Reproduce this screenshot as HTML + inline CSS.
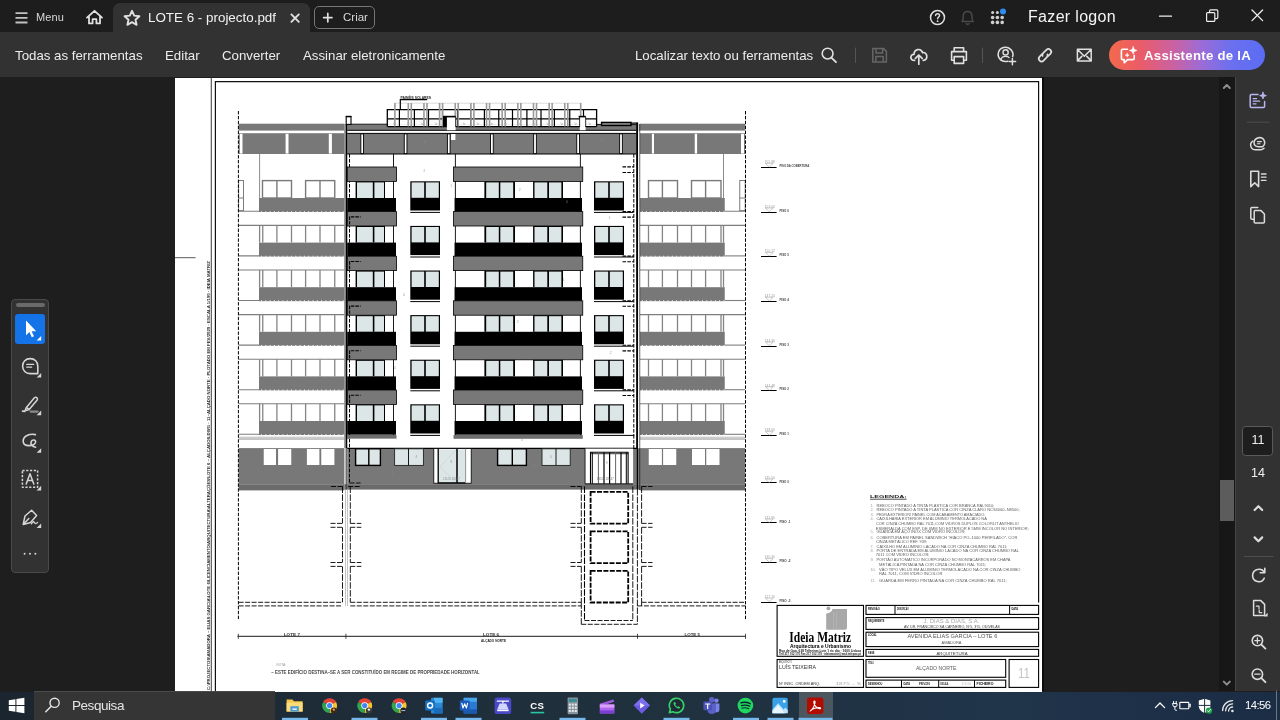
<!DOCTYPE html>
<html lang="pt">
<head>
<meta charset="utf-8">
<title>LOTE 6 - projecto.pdf</title>
<style>
*{box-sizing:border-box;margin:0;padding:0}
html,body{width:1280px;height:720px;overflow:hidden;background:#1e1e1e;font-family:"Liberation Sans",sans-serif;color:#e6e6e6}
.abs{position:absolute}
#titlebar{position:absolute;left:0;top:0;width:1280px;height:32px;background:#1d1d1d}
#toolbar{position:absolute;left:0;top:32px;width:1280px;height:45px;background:#323232}
#tab{position:absolute;left:113px;top:3px;width:197px;height:30px;background:#323232;border-radius:7px 7px 0 0}
.t{position:absolute;white-space:nowrap;line-height:1;will-change:transform}
#criar{position:absolute;left:314px;top:6px;width:61px;height:23px;border:1px solid #757575;border-radius:5px}
#main{position:absolute;left:0;top:77px;width:1280px;height:614px;background:#1e1e1e}
#sbtrack{position:absolute;left:1219px;top:77px;width:16px;height:614px;background:#171717}
#sbthumb{position:absolute;left:1220px;top:480px;width:14px;height:41px;background:#5c5c5c}
#rpanel{position:absolute;left:1235px;top:77px;width:45px;height:614px;background:#323232;border-left:1px solid #464646}
#lpanel{position:absolute;left:11px;top:299px;width:38px;height:274px;background:#323232;border:1px solid #4a4a4a;border-radius:4px}
#page{position:absolute;left:174.5px;top:77.5px;width:867.5px;height:614px;background:#fff}
#pageshadow{position:absolute;left:1042px;top:77px;width:1.5px;height:614px;background:#0c0c0c}
#taskbar{position:absolute;left:0;top:691.500px;width:1280px;height:28.500px;background:linear-gradient(90deg,#1b2530 0%,#1e2c38 25%,#20323f 55%,#20344a 78%,#1b2c45 100%)}
#search{position:absolute;left:34px;top:691.500px;width:240.500px;height:28.500px;background:#353535}
svg{position:absolute;overflow:visible}
</style>
</head>
<body>
<div id="main"></div>
<div id="page"></div>
<div id="pageshadow"></div>
<svg style="left:0;top:0;will-change:transform" width="1280" height="720" viewBox="0 0 1280 720" shape-rendering="auto">
<defs><clipPath id="pg"><rect x="174.5" y="77.5" width="867.5" height="613.7"/></clipPath></defs>
<g clip-path="url(#pg)">
<g fill="none">
<path d="M211.3 77.5L211.3 691" stroke="#4a4a4a" stroke-width="1.1"/>
<path d="M215.4 691V81.6H1038.6V602.5" stroke="#111" stroke-width="1.2"/>
<path d="M175 257.7L195.6 257.7" stroke="#5a5a5a" stroke-width="1"/>
</g>
<rect x="238.6" y="123.7" width="105.8" height="6.9" fill="#787878"/>
<rect x="238.6" y="133.2" width="105.8" height="20.8" fill="#787878"/>
<rect x="239.8" y="133.8" width="2.7" height="19.8" fill="#fff"/>
<rect x="285.6" y="133.8" width="2.9" height="19.8" fill="#fff"/>
<rect x="328.8" y="133.8" width="3.1" height="19.8" fill="#fff"/>
<path d="M259.6 154L259.6 198" stroke="#7e7e7e" stroke-width="0.9"/>
<rect x="262.5" y="180.6" width="29" height="17.4" fill="none" stroke="#7a7a7a" stroke-width="1.4"/>
<path d="M276.9 180.5L276.9 198" stroke="#7a7a7a" stroke-width="1.4"/>
<rect x="305.6" y="180.6" width="29.15" height="17.4" fill="none" stroke="#7a7a7a" stroke-width="1.4"/>
<path d="M320 180.5L320 198" stroke="#7a7a7a" stroke-width="1.4"/>
<rect x="238.6" y="180.5" width="4.9" height="30.1" fill="none" stroke="#7c7c7c" stroke-width="1"/>
<path d="M238.6 198L243.5 198" stroke="#7c7c7c" stroke-width="1"/>
<rect x="259" y="198" width="85.4" height="14" fill="#787878"/>
<path d="M261 211.7H344.4" stroke="#fff" stroke-width="1.1" stroke-dasharray="0.9 3.4" fill="none"/>
<path d="M238.6 211.3L259 211.3" stroke="#7e7e7e" stroke-width="1.1"/>
<path d="M238.6 225.4L344.4 225.4" stroke="#7e7e7e" stroke-width="1.1"/>
<rect x="259" y="242.6" width="85.4" height="14" fill="#787878"/>
<path d="M261 256.3H344.4" stroke="#fff" stroke-width="1.1" stroke-dasharray="0.9 3.4" fill="none"/>
<path d="M238.6 255.9L259 255.9" stroke="#7e7e7e" stroke-width="1.1"/>
<path d="M238.6 270L344.4 270" stroke="#7e7e7e" stroke-width="1.1"/>
<path d="M259.6 225.4L259.6 242.6" stroke="#848484" stroke-width="1.3"/>
<path d="M262.75 225.4L262.75 242.6" stroke="#848484" stroke-width="1.3"/>
<path d="M276.9 225.4L276.9 242.6" stroke="#848484" stroke-width="1.3"/>
<path d="M291.5 225.4L291.5 242.6" stroke="#848484" stroke-width="1.3"/>
<path d="M305.6 225.4L305.6 242.6" stroke="#848484" stroke-width="1.3"/>
<path d="M320 225.4L320 242.6" stroke="#848484" stroke-width="1.3"/>
<path d="M334.75 225.4L334.75 242.6" stroke="#848484" stroke-width="1.3"/>
<rect x="259" y="287.2" width="85.4" height="14" fill="#787878"/>
<path d="M261 300.9H344.4" stroke="#fff" stroke-width="1.1" stroke-dasharray="0.9 3.4" fill="none"/>
<path d="M238.6 300.5L259 300.5" stroke="#7e7e7e" stroke-width="1.1"/>
<path d="M238.6 314.6L344.4 314.6" stroke="#7e7e7e" stroke-width="1.1"/>
<path d="M259.6 270L259.6 287.2" stroke="#848484" stroke-width="1.3"/>
<path d="M262.75 270L262.75 287.2" stroke="#848484" stroke-width="1.3"/>
<path d="M276.9 270L276.9 287.2" stroke="#848484" stroke-width="1.3"/>
<path d="M291.5 270L291.5 287.2" stroke="#848484" stroke-width="1.3"/>
<path d="M305.6 270L305.6 287.2" stroke="#848484" stroke-width="1.3"/>
<path d="M320 270L320 287.2" stroke="#848484" stroke-width="1.3"/>
<path d="M334.75 270L334.75 287.2" stroke="#848484" stroke-width="1.3"/>
<rect x="259" y="331.8" width="85.4" height="14" fill="#787878"/>
<path d="M261 345.5H344.4" stroke="#fff" stroke-width="1.1" stroke-dasharray="0.9 3.4" fill="none"/>
<path d="M238.6 345.1L259 345.1" stroke="#7e7e7e" stroke-width="1.1"/>
<path d="M238.6 359.2L344.4 359.2" stroke="#7e7e7e" stroke-width="1.1"/>
<path d="M259.6 314.6L259.6 331.8" stroke="#848484" stroke-width="1.3"/>
<path d="M262.75 314.6L262.75 331.8" stroke="#848484" stroke-width="1.3"/>
<path d="M276.9 314.6L276.9 331.8" stroke="#848484" stroke-width="1.3"/>
<path d="M291.5 314.6L291.5 331.8" stroke="#848484" stroke-width="1.3"/>
<path d="M305.6 314.6L305.6 331.8" stroke="#848484" stroke-width="1.3"/>
<path d="M320 314.6L320 331.8" stroke="#848484" stroke-width="1.3"/>
<path d="M334.75 314.6L334.75 331.8" stroke="#848484" stroke-width="1.3"/>
<rect x="259" y="376.4" width="85.4" height="14" fill="#787878"/>
<path d="M261 390.1H344.4" stroke="#fff" stroke-width="1.1" stroke-dasharray="0.9 3.4" fill="none"/>
<path d="M238.6 389.7L259 389.7" stroke="#7e7e7e" stroke-width="1.1"/>
<path d="M238.6 403.8L344.4 403.8" stroke="#7e7e7e" stroke-width="1.1"/>
<path d="M259.6 359.2L259.6 376.4" stroke="#848484" stroke-width="1.3"/>
<path d="M262.75 359.2L262.75 376.4" stroke="#848484" stroke-width="1.3"/>
<path d="M276.9 359.2L276.9 376.4" stroke="#848484" stroke-width="1.3"/>
<path d="M291.5 359.2L291.5 376.4" stroke="#848484" stroke-width="1.3"/>
<path d="M305.6 359.2L305.6 376.4" stroke="#848484" stroke-width="1.3"/>
<path d="M320 359.2L320 376.4" stroke="#848484" stroke-width="1.3"/>
<path d="M334.75 359.2L334.75 376.4" stroke="#848484" stroke-width="1.3"/>
<rect x="259" y="421" width="85.4" height="14" fill="#787878"/>
<path d="M261 434.7H344.4" stroke="#fff" stroke-width="1.1" stroke-dasharray="0.9 3.4" fill="none"/>
<path d="M238.6 434.3L259 434.3" stroke="#7e7e7e" stroke-width="1.1"/>
<path d="M259.6 403.8L259.6 421" stroke="#848484" stroke-width="1.3"/>
<path d="M262.75 403.8L262.75 421" stroke="#848484" stroke-width="1.3"/>
<path d="M276.9 403.8L276.9 421" stroke="#848484" stroke-width="1.3"/>
<path d="M291.5 403.8L291.5 421" stroke="#848484" stroke-width="1.3"/>
<path d="M305.6 403.8L305.6 421" stroke="#848484" stroke-width="1.3"/>
<path d="M320 403.8L320 421" stroke="#848484" stroke-width="1.3"/>
<path d="M334.75 403.8L334.75 421" stroke="#848484" stroke-width="1.3"/>
<rect x="238.6" y="436.6" width="105.8" height="2.8" fill="#cdcdcd"/>
<path d="M238.6 439.3L344.4 439.3" stroke="#a8a8a8" stroke-width="0.7"/>
<rect x="238.6" y="448.1" width="105.8" height="36.5" fill="#787878"/>
<rect x="238.6" y="484.4" width="105.8" height="6" fill="#6b6b6b"/>
<rect x="263.75" y="449" width="12.25" height="16" fill="#fff"/>
<rect x="278.1" y="449" width="13.15" height="16" fill="#fff"/>
<rect x="306.9" y="449" width="12.5" height="16" fill="#fff"/>
<rect x="321.25" y="449" width="13.15" height="16" fill="#fff"/>
<rect x="639.8" y="123.7" width="105.3" height="6.9" fill="#787878"/>
<rect x="639.8" y="133.2" width="105.3" height="20.8" fill="#787878"/>
<rect x="651.9" y="133.8" width="2.1" height="19.8" fill="#fff"/>
<rect x="694.75" y="133.8" width="2.35" height="19.8" fill="#fff"/>
<rect x="741" y="133.8" width="3" height="19.8" fill="#fff"/>
<path d="M723.5 154L723.5 198" stroke="#7e7e7e" stroke-width="0.9"/>
<rect x="648.5" y="180.6" width="29" height="17.4" fill="none" stroke="#7a7a7a" stroke-width="1.4"/>
<path d="M662.4 180.5L662.4 198" stroke="#7a7a7a" stroke-width="1.4"/>
<rect x="691.5" y="180.6" width="29.5" height="17.4" fill="none" stroke="#7a7a7a" stroke-width="1.4"/>
<path d="M705.6 180.5L705.6 198" stroke="#7a7a7a" stroke-width="1.4"/>
<rect x="739.75" y="180.5" width="5.45" height="30.1" fill="none" stroke="#7c7c7c" stroke-width="1"/>
<path d="M739.75 198L745.2 198" stroke="#7c7c7c" stroke-width="1"/>
<rect x="639.8" y="198" width="84.95" height="14" fill="#787878"/>
<path d="M641.8 211.7H724.75" stroke="#fff" stroke-width="1.1" stroke-dasharray="0.9 3.4" fill="none"/>
<path d="M724.75 211.3L745.1 211.3" stroke="#7e7e7e" stroke-width="1.1"/>
<path d="M639.8 225.4L745.1 225.4" stroke="#7e7e7e" stroke-width="1.1"/>
<rect x="639.8" y="242.6" width="84.95" height="14" fill="#787878"/>
<path d="M641.8 256.3H724.75" stroke="#fff" stroke-width="1.1" stroke-dasharray="0.9 3.4" fill="none"/>
<path d="M724.75 255.9L745.1 255.9" stroke="#7e7e7e" stroke-width="1.1"/>
<path d="M639.8 270L745.1 270" stroke="#7e7e7e" stroke-width="1.1"/>
<path d="M648.5 225.4L648.5 242.6" stroke="#848484" stroke-width="1.3"/>
<path d="M662.4 225.4L662.4 242.6" stroke="#848484" stroke-width="1.3"/>
<path d="M677.5 225.4L677.5 242.6" stroke="#848484" stroke-width="1.3"/>
<path d="M691.5 225.4L691.5 242.6" stroke="#848484" stroke-width="1.3"/>
<path d="M705.6 225.4L705.6 242.6" stroke="#848484" stroke-width="1.3"/>
<path d="M721 225.4L721 242.6" stroke="#848484" stroke-width="1.3"/>
<path d="M723.5 225.4L723.5 242.6" stroke="#848484" stroke-width="1.3"/>
<rect x="639.8" y="287.2" width="84.95" height="14" fill="#787878"/>
<path d="M641.8 300.9H724.75" stroke="#fff" stroke-width="1.1" stroke-dasharray="0.9 3.4" fill="none"/>
<path d="M724.75 300.5L745.1 300.5" stroke="#7e7e7e" stroke-width="1.1"/>
<path d="M639.8 314.6L745.1 314.6" stroke="#7e7e7e" stroke-width="1.1"/>
<path d="M648.5 270L648.5 287.2" stroke="#848484" stroke-width="1.3"/>
<path d="M662.4 270L662.4 287.2" stroke="#848484" stroke-width="1.3"/>
<path d="M677.5 270L677.5 287.2" stroke="#848484" stroke-width="1.3"/>
<path d="M691.5 270L691.5 287.2" stroke="#848484" stroke-width="1.3"/>
<path d="M705.6 270L705.6 287.2" stroke="#848484" stroke-width="1.3"/>
<path d="M721 270L721 287.2" stroke="#848484" stroke-width="1.3"/>
<path d="M723.5 270L723.5 287.2" stroke="#848484" stroke-width="1.3"/>
<rect x="639.8" y="331.8" width="84.95" height="14" fill="#787878"/>
<path d="M641.8 345.5H724.75" stroke="#fff" stroke-width="1.1" stroke-dasharray="0.9 3.4" fill="none"/>
<path d="M724.75 345.1L745.1 345.1" stroke="#7e7e7e" stroke-width="1.1"/>
<path d="M639.8 359.2L745.1 359.2" stroke="#7e7e7e" stroke-width="1.1"/>
<path d="M648.5 314.6L648.5 331.8" stroke="#848484" stroke-width="1.3"/>
<path d="M662.4 314.6L662.4 331.8" stroke="#848484" stroke-width="1.3"/>
<path d="M677.5 314.6L677.5 331.8" stroke="#848484" stroke-width="1.3"/>
<path d="M691.5 314.6L691.5 331.8" stroke="#848484" stroke-width="1.3"/>
<path d="M705.6 314.6L705.6 331.8" stroke="#848484" stroke-width="1.3"/>
<path d="M721 314.6L721 331.8" stroke="#848484" stroke-width="1.3"/>
<path d="M723.5 314.6L723.5 331.8" stroke="#848484" stroke-width="1.3"/>
<rect x="639.8" y="376.4" width="84.95" height="14" fill="#787878"/>
<path d="M641.8 390.1H724.75" stroke="#fff" stroke-width="1.1" stroke-dasharray="0.9 3.4" fill="none"/>
<path d="M724.75 389.7L745.1 389.7" stroke="#7e7e7e" stroke-width="1.1"/>
<path d="M639.8 403.8L745.1 403.8" stroke="#7e7e7e" stroke-width="1.1"/>
<path d="M648.5 359.2L648.5 376.4" stroke="#848484" stroke-width="1.3"/>
<path d="M662.4 359.2L662.4 376.4" stroke="#848484" stroke-width="1.3"/>
<path d="M677.5 359.2L677.5 376.4" stroke="#848484" stroke-width="1.3"/>
<path d="M691.5 359.2L691.5 376.4" stroke="#848484" stroke-width="1.3"/>
<path d="M705.6 359.2L705.6 376.4" stroke="#848484" stroke-width="1.3"/>
<path d="M721 359.2L721 376.4" stroke="#848484" stroke-width="1.3"/>
<path d="M723.5 359.2L723.5 376.4" stroke="#848484" stroke-width="1.3"/>
<rect x="639.8" y="421" width="84.95" height="14" fill="#787878"/>
<path d="M641.8 434.7H724.75" stroke="#fff" stroke-width="1.1" stroke-dasharray="0.9 3.4" fill="none"/>
<path d="M724.75 434.3L745.1 434.3" stroke="#7e7e7e" stroke-width="1.1"/>
<path d="M648.5 403.8L648.5 421" stroke="#848484" stroke-width="1.3"/>
<path d="M662.4 403.8L662.4 421" stroke="#848484" stroke-width="1.3"/>
<path d="M677.5 403.8L677.5 421" stroke="#848484" stroke-width="1.3"/>
<path d="M691.5 403.8L691.5 421" stroke="#848484" stroke-width="1.3"/>
<path d="M705.6 403.8L705.6 421" stroke="#848484" stroke-width="1.3"/>
<path d="M721 403.8L721 421" stroke="#848484" stroke-width="1.3"/>
<path d="M723.5 403.8L723.5 421" stroke="#848484" stroke-width="1.3"/>
<rect x="639.8" y="436.6" width="105.3" height="2.8" fill="#cdcdcd"/>
<path d="M639.8 439.3L745.1 439.3" stroke="#a8a8a8" stroke-width="0.7"/>
<rect x="639.8" y="448.1" width="105.3" height="36.5" fill="#787878"/>
<rect x="639.8" y="484.4" width="105.3" height="6" fill="#6b6b6b"/>
<rect x="648.75" y="449" width="13.15" height="16" fill="#fff"/>
<rect x="663.1" y="449" width="13.15" height="16" fill="#fff"/>
<rect x="692" y="449" width="13" height="16" fill="#fff"/>
<rect x="706.25" y="449" width="13.25" height="16" fill="#fff"/>
<g fill="none">
<path d="M238.4 111L238.4 619.5" stroke="#000" stroke-width="1" stroke-dasharray="3.4 1.5"/>
<path d="M745.5 111L745.5 619.5" stroke="#000" stroke-width="1" stroke-dasharray="3.4 1.5"/>
</g>
<rect x="347.2" y="124.4" width="289.2" height="5.8" fill="#787878"/>
<rect x="387.3" y="124.2" width="209.3" height="2.8" fill="#fff"/>
<rect x="347.2" y="133.5" width="289.2" height="20.5" fill="#787878"/>
<g fill="none">
<path d="M351 124.2L387.3 124.2" stroke="#000" stroke-width="0.9"/>
<path d="M596.6 124.4L601.5 124.4" stroke="#000" stroke-width="0.9"/>
<path d="M631 124.6L636 124.6" stroke="#000" stroke-width="0.9"/>
<path d="M347.2 130.3L636.4 130.3" stroke="#000" stroke-width="1"/>
<path d="M347.2 133.4L636.4 133.4" stroke="#000" stroke-width="1"/>
<path d="M347.2 154L636.4 154" stroke="#000" stroke-width="1.1"/>
</g>
<rect x="360.85" y="133.9" width="2.7" height="19.7" fill="#fff" stroke="#000" stroke-width="0.9"/>
<rect x="404.25" y="133.9" width="2.7" height="19.7" fill="#fff" stroke="#000" stroke-width="0.9"/>
<rect x="447.4" y="133.9" width="2.7" height="19.7" fill="#fff" stroke="#000" stroke-width="0.9"/>
<rect x="490.55" y="133.9" width="2.7" height="19.7" fill="#fff" stroke="#000" stroke-width="0.9"/>
<rect x="533.65" y="133.9" width="2.7" height="19.7" fill="#fff" stroke="#000" stroke-width="0.9"/>
<rect x="576.75" y="133.9" width="2.7" height="19.7" fill="#fff" stroke="#000" stroke-width="0.9"/>
<rect x="619.65" y="133.9" width="2.7" height="19.7" fill="#fff" stroke="#000" stroke-width="0.9"/>
<g fill="none">
<path d="M394.5 103.2L581 103.2" stroke="#c4c4c4" stroke-width="0.6"/>
<path d="M387.3 126.6V109.7H596.6V126.6" stroke="#000" stroke-width="1.3"/>
<path d="M387.3 118.8L596.6 118.8" stroke="#000" stroke-width="1.2"/>
<path d="M387.3 126.6L596.6 126.6" stroke="#000" stroke-width="1.1"/>
<path d="M399.4 109.7L399.4 126.6" stroke="#000" stroke-width="1.2"/>
<path d="M414.4 109.7L414.4 126.6" stroke="#000" stroke-width="1.2"/>
<path d="M428.5 109.7L428.5 126.6" stroke="#000" stroke-width="1.2"/>
<path d="M442.5 109.7L442.5 126.6" stroke="#000" stroke-width="1.2"/>
<path d="M457.5 109.7L457.5 126.6" stroke="#000" stroke-width="1.2"/>
<path d="M470.6 109.7L470.6 126.6" stroke="#000" stroke-width="1.2"/>
<path d="M484.4 109.7L484.4 126.6" stroke="#000" stroke-width="1.2"/>
<path d="M498.75 109.7L498.75 126.6" stroke="#000" stroke-width="1.2"/>
<path d="M512.5 109.7L512.5 126.6" stroke="#000" stroke-width="1.2"/>
<path d="M526.9 109.7L526.9 126.6" stroke="#000" stroke-width="1.2"/>
<path d="M541 109.7L541 126.6" stroke="#000" stroke-width="1.2"/>
<path d="M554.4 109.7L554.4 126.6" stroke="#000" stroke-width="1.2"/>
<path d="M569.75 109.7L569.75 126.6" stroke="#000" stroke-width="1.2"/>
<path d="M583.5 109.7L583.5 126.6" stroke="#000" stroke-width="1.2"/>
<path d="M394.9 103L394.9 126.5" stroke="#9a9a9a" stroke-width="1.6"/>
<path d="M580.7 103L580.7 126.5" stroke="#9a9a9a" stroke-width="1.6"/>
<path d="M408.3 103L408.3 126.5" stroke="#9a9a9a" stroke-width="1.6"/>
<path d="M411.3 103L411.3 126.5" stroke="#9a9a9a" stroke-width="1.6"/>
<path d="M423.95 103L423.95 126.5" stroke="#9a9a9a" stroke-width="1.6"/>
<path d="M426.95 103L426.95 126.5" stroke="#9a9a9a" stroke-width="1.6"/>
<path d="M439.6 103L439.6 126.5" stroke="#9a9a9a" stroke-width="1.6"/>
<path d="M442.6 103L442.6 126.5" stroke="#9a9a9a" stroke-width="1.6"/>
<path d="M455.25 103L455.25 126.5" stroke="#9a9a9a" stroke-width="1.6"/>
<path d="M458.25 103L458.25 126.5" stroke="#9a9a9a" stroke-width="1.6"/>
<path d="M470.9 103L470.9 126.5" stroke="#9a9a9a" stroke-width="1.6"/>
<path d="M473.9 103L473.9 126.5" stroke="#9a9a9a" stroke-width="1.6"/>
<path d="M486.55 103L486.55 126.5" stroke="#9a9a9a" stroke-width="1.6"/>
<path d="M489.55 103L489.55 126.5" stroke="#9a9a9a" stroke-width="1.6"/>
<path d="M502.2 103L502.2 126.5" stroke="#9a9a9a" stroke-width="1.6"/>
<path d="M505.2 103L505.2 126.5" stroke="#9a9a9a" stroke-width="1.6"/>
<path d="M517.85 103L517.85 126.5" stroke="#9a9a9a" stroke-width="1.6"/>
<path d="M520.85 103L520.85 126.5" stroke="#9a9a9a" stroke-width="1.6"/>
<path d="M533.5 103L533.5 126.5" stroke="#9a9a9a" stroke-width="1.6"/>
<path d="M536.5 103L536.5 126.5" stroke="#9a9a9a" stroke-width="1.6"/>
<path d="M549.15 103L549.15 126.5" stroke="#9a9a9a" stroke-width="1.6"/>
<path d="M552.15 103L552.15 126.5" stroke="#9a9a9a" stroke-width="1.6"/>
<path d="M564.8 103L564.8 126.5" stroke="#9a9a9a" stroke-width="1.6"/>
<path d="M567.8 103L567.8 126.5" stroke="#9a9a9a" stroke-width="1.6"/>
<path d="M393.28 122.4l1 2.6 1-2" stroke="#aaa" stroke-width="0.6"/>
<path d="M407.23 122.4l1 2.6 1-2" stroke="#aaa" stroke-width="0.6"/>
<path d="M421.18 122.4l1 2.6 1-2" stroke="#aaa" stroke-width="0.6"/>
<path d="M435.14 122.4l1 2.6 1-2" stroke="#aaa" stroke-width="0.6"/>
<path d="M449.09 122.4l1 2.6 1-2" stroke="#aaa" stroke-width="0.6"/>
<path d="M463.04 122.4l1 2.6 1-2" stroke="#aaa" stroke-width="0.6"/>
<path d="M477 122.4l1 2.6 1-2" stroke="#aaa" stroke-width="0.6"/>
<path d="M490.95 122.4l1 2.6 1-2" stroke="#aaa" stroke-width="0.6"/>
<path d="M504.9 122.4l1 2.6 1-2" stroke="#aaa" stroke-width="0.6"/>
<path d="M518.86 122.4l1 2.6 1-2" stroke="#aaa" stroke-width="0.6"/>
<path d="M532.81 122.4l1 2.6 1-2" stroke="#aaa" stroke-width="0.6"/>
<path d="M546.76 122.4l1 2.6 1-2" stroke="#aaa" stroke-width="0.6"/>
<path d="M560.72 122.4l1 2.6 1-2" stroke="#aaa" stroke-width="0.6"/>
<path d="M574.67 122.4l1 2.6 1-2" stroke="#aaa" stroke-width="0.6"/>
<path d="M588.62 122.4l1 2.6 1-2" stroke="#aaa" stroke-width="0.6"/>
</g>
<rect x="443" y="116" width="4" height="11" fill="#000"/>
<rect x="446.9" y="116.9" width="8.7" height="13.3" fill="#fff"/>
<rect x="443" y="115.8" width="12.8" height="1.6" fill="#000"/>
<path d="M455.7 117L455.7 127" stroke="#000" stroke-width="0.8"/>
<rect x="451" y="134" width="4.4" height="6" fill="#fff"/>
<rect x="579.75" y="116.4" width="5.85" height="13.8" fill="#fff"/>
<rect x="578.6" y="115.8" width="7.2" height="1.6" fill="#000"/>
<g fill="none">
<path d="M579.6 117L579.6 127" stroke="#000" stroke-width="0.8"/>
<path d="M585.7 117L585.7 127" stroke="#000" stroke-width="0.8"/>
</g>
<rect x="601.6" y="122.4" width="29.4" height="3.1" fill="#8a8a8a" stroke="#000" stroke-width="1.4"/>
<rect x="346.2" y="116.6" width="4.8" height="7.8" fill="#fff" stroke="#000" stroke-width="1.1"/>
<rect x="345.8" y="115.8" width="5.6" height="1.4" fill="#000"/>
<path d="M400.3 109.7V99.7H427.2" stroke="#000" stroke-width="1.2" fill="none"/>
<g fill="none">
<path d="M393.5 154L393.5 435" stroke="#000" stroke-width="0.9"/>
<path d="M455.4 154L455.4 435" stroke="#000" stroke-width="0.9"/>
<path d="M580.4 154L580.4 435" stroke="#000" stroke-width="0.9"/>
<path d="M349.5 154L349.5 438" stroke="#000" stroke-width="1" stroke-dasharray="3.6 1.4"/>
<path d="M633.8 154L633.8 436" stroke="#000" stroke-width="1" stroke-dasharray="3.6 1.4"/>
</g>
<rect x="355.6" y="181.3" width="29.4" height="16.7" fill="#000"/>
<rect x="357" y="182.4" width="15.8" height="15.6" fill="#dde6e6"/>
<rect x="374.4" y="182.4" width="9.6" height="15.6" fill="#dde6e6"/>
<rect x="484.4" y="181.3" width="30.6" height="16.7" fill="#000"/>
<rect x="486.2" y="182.4" width="12.6" height="15.6" fill="#dde6e6"/>
<rect x="500.3" y="182.4" width="12.9" height="15.6" fill="#dde6e6"/>
<rect x="533.1" y="181.3" width="29.9" height="16.7" fill="#000"/>
<rect x="534.5" y="182.4" width="12.8" height="15.6" fill="#dde6e6"/>
<rect x="549" y="182.4" width="12.4" height="15.6" fill="#dde6e6"/>
<rect x="347.2" y="167" width="49.3" height="14.4" fill="#787878" stroke="#000" stroke-width="0.8"/>
<rect x="453.5" y="167" width="129.25" height="14.4" fill="#787878" stroke="#000" stroke-width="0.8"/>
<rect x="347.2" y="198" width="48.8" height="13.7" fill="#000"/>
<rect x="454.6" y="198" width="127.4" height="13.7" fill="#000"/>
<rect x="410.3" y="181.3" width="29.7" height="29.2" fill="#000"/>
<rect x="411.6" y="182.4" width="12.6" height="15.4" fill="#dde6e6"/>
<rect x="425.8" y="182.4" width="13" height="15.4" fill="#dde6e6"/>
<rect x="594" y="181.3" width="30" height="29.2" fill="#000"/>
<rect x="595.3" y="182.4" width="12.9" height="15.4" fill="#dde6e6"/>
<rect x="609.8" y="182.4" width="13" height="15.4" fill="#dde6e6"/>
<g fill="none">
<path d="M410.3 212.4L440 212.4" stroke="#000" stroke-width="1"/>
<path d="M594 212.4L633.5 212.4" stroke="#000" stroke-width="1"/>
<path d="M622.5 166.9L633.8 166.9" stroke="#000" stroke-width="1.1" stroke-dasharray="3.6 1.2"/>
<path d="M622.5 172.5L633.8 172.5" stroke="#000" stroke-width="1.1" stroke-dasharray="3.6 1.2"/>
</g>
<rect x="355.6" y="225.9" width="29.4" height="16.7" fill="#000"/>
<rect x="357" y="227" width="15.8" height="15.6" fill="#dde6e6"/>
<rect x="374.4" y="227" width="9.6" height="15.6" fill="#dde6e6"/>
<rect x="484.4" y="225.9" width="30.6" height="16.7" fill="#000"/>
<rect x="486.2" y="227" width="12.6" height="15.6" fill="#dde6e6"/>
<rect x="500.3" y="227" width="12.9" height="15.6" fill="#dde6e6"/>
<rect x="533.1" y="225.9" width="29.9" height="16.7" fill="#000"/>
<rect x="534.5" y="227" width="12.8" height="15.6" fill="#dde6e6"/>
<rect x="549" y="227" width="12.4" height="15.6" fill="#dde6e6"/>
<rect x="347.2" y="211.6" width="49.3" height="14.4" fill="#787878" stroke="#000" stroke-width="0.8"/>
<rect x="453.5" y="211.6" width="129.25" height="14.4" fill="#787878" stroke="#000" stroke-width="0.8"/>
<rect x="347.2" y="242.6" width="48.8" height="13.7" fill="#000"/>
<rect x="454.6" y="242.6" width="127.4" height="13.7" fill="#000"/>
<rect x="410.3" y="225.9" width="29.7" height="29.2" fill="#000"/>
<rect x="411.6" y="227" width="12.6" height="15.4" fill="#dde6e6"/>
<rect x="425.8" y="227" width="13" height="15.4" fill="#dde6e6"/>
<rect x="594" y="225.9" width="30" height="29.2" fill="#000"/>
<rect x="595.3" y="227" width="12.9" height="15.4" fill="#dde6e6"/>
<rect x="609.8" y="227" width="13" height="15.4" fill="#dde6e6"/>
<g fill="none">
<path d="M410.3 257L440 257" stroke="#000" stroke-width="1"/>
<path d="M594 257L633.5 257" stroke="#000" stroke-width="1"/>
<path d="M622.5 211.5L633.8 211.5" stroke="#000" stroke-width="1.1" stroke-dasharray="3.6 1.2"/>
<path d="M622.5 217.1L633.8 217.1" stroke="#000" stroke-width="1.1" stroke-dasharray="3.6 1.2"/>
<path d="M349.6 224.6V216.9H360.6" stroke="#000" stroke-width="1.1" stroke-dasharray="3.4 1.1"/>
</g>
<rect x="355.6" y="270.5" width="29.4" height="16.7" fill="#000"/>
<rect x="357" y="271.6" width="15.8" height="15.6" fill="#dde6e6"/>
<rect x="374.4" y="271.6" width="9.6" height="15.6" fill="#dde6e6"/>
<rect x="484.4" y="270.5" width="30.6" height="16.7" fill="#000"/>
<rect x="486.2" y="271.6" width="12.6" height="15.6" fill="#dde6e6"/>
<rect x="500.3" y="271.6" width="12.9" height="15.6" fill="#dde6e6"/>
<rect x="533.1" y="270.5" width="29.9" height="16.7" fill="#000"/>
<rect x="534.5" y="271.6" width="12.8" height="15.6" fill="#dde6e6"/>
<rect x="549" y="271.6" width="12.4" height="15.6" fill="#dde6e6"/>
<rect x="347.2" y="256.2" width="49.3" height="14.4" fill="#787878" stroke="#000" stroke-width="0.8"/>
<rect x="453.5" y="256.2" width="129.25" height="14.4" fill="#787878" stroke="#000" stroke-width="0.8"/>
<rect x="347.2" y="287.2" width="48.8" height="13.7" fill="#000"/>
<rect x="454.6" y="287.2" width="127.4" height="13.7" fill="#000"/>
<rect x="410.3" y="270.5" width="29.7" height="29.2" fill="#000"/>
<rect x="411.6" y="271.6" width="12.6" height="15.4" fill="#dde6e6"/>
<rect x="425.8" y="271.6" width="13" height="15.4" fill="#dde6e6"/>
<rect x="594" y="270.5" width="30" height="29.2" fill="#000"/>
<rect x="595.3" y="271.6" width="12.9" height="15.4" fill="#dde6e6"/>
<rect x="609.8" y="271.6" width="13" height="15.4" fill="#dde6e6"/>
<g fill="none">
<path d="M410.3 301.6L440 301.6" stroke="#000" stroke-width="1"/>
<path d="M594 301.6L633.5 301.6" stroke="#000" stroke-width="1"/>
<path d="M622.5 256.1L633.8 256.1" stroke="#000" stroke-width="1.1" stroke-dasharray="3.6 1.2"/>
<path d="M622.5 261.7L633.8 261.7" stroke="#000" stroke-width="1.1" stroke-dasharray="3.6 1.2"/>
<path d="M349.6 269.2V261.5H360.6" stroke="#000" stroke-width="1.1" stroke-dasharray="3.4 1.1"/>
</g>
<rect x="355.6" y="315.1" width="29.4" height="16.7" fill="#000"/>
<rect x="357" y="316.2" width="15.8" height="15.6" fill="#dde6e6"/>
<rect x="374.4" y="316.2" width="9.6" height="15.6" fill="#dde6e6"/>
<rect x="484.4" y="315.1" width="30.6" height="16.7" fill="#000"/>
<rect x="486.2" y="316.2" width="12.6" height="15.6" fill="#dde6e6"/>
<rect x="500.3" y="316.2" width="12.9" height="15.6" fill="#dde6e6"/>
<rect x="533.1" y="315.1" width="29.9" height="16.7" fill="#000"/>
<rect x="534.5" y="316.2" width="12.8" height="15.6" fill="#dde6e6"/>
<rect x="549" y="316.2" width="12.4" height="15.6" fill="#dde6e6"/>
<rect x="347.2" y="300.8" width="49.3" height="14.4" fill="#787878" stroke="#000" stroke-width="0.8"/>
<rect x="453.5" y="300.8" width="129.25" height="14.4" fill="#787878" stroke="#000" stroke-width="0.8"/>
<rect x="347.2" y="331.8" width="48.8" height="13.7" fill="#000"/>
<rect x="454.6" y="331.8" width="127.4" height="13.7" fill="#000"/>
<rect x="410.3" y="315.1" width="29.7" height="29.2" fill="#000"/>
<rect x="411.6" y="316.2" width="12.6" height="15.4" fill="#dde6e6"/>
<rect x="425.8" y="316.2" width="13" height="15.4" fill="#dde6e6"/>
<rect x="594" y="315.1" width="30" height="29.2" fill="#000"/>
<rect x="595.3" y="316.2" width="12.9" height="15.4" fill="#dde6e6"/>
<rect x="609.8" y="316.2" width="13" height="15.4" fill="#dde6e6"/>
<g fill="none">
<path d="M410.3 346.2L440 346.2" stroke="#000" stroke-width="1"/>
<path d="M594 346.2L633.5 346.2" stroke="#000" stroke-width="1"/>
<path d="M622.5 300.7L633.8 300.7" stroke="#000" stroke-width="1.1" stroke-dasharray="3.6 1.2"/>
<path d="M622.5 306.3L633.8 306.3" stroke="#000" stroke-width="1.1" stroke-dasharray="3.6 1.2"/>
<path d="M349.6 313.8V306.1H360.6" stroke="#000" stroke-width="1.1" stroke-dasharray="3.4 1.1"/>
</g>
<rect x="355.6" y="359.7" width="29.4" height="16.7" fill="#000"/>
<rect x="357" y="360.8" width="15.8" height="15.6" fill="#dde6e6"/>
<rect x="374.4" y="360.8" width="9.6" height="15.6" fill="#dde6e6"/>
<rect x="484.4" y="359.7" width="30.6" height="16.7" fill="#000"/>
<rect x="486.2" y="360.8" width="12.6" height="15.6" fill="#dde6e6"/>
<rect x="500.3" y="360.8" width="12.9" height="15.6" fill="#dde6e6"/>
<rect x="533.1" y="359.7" width="29.9" height="16.7" fill="#000"/>
<rect x="534.5" y="360.8" width="12.8" height="15.6" fill="#dde6e6"/>
<rect x="549" y="360.8" width="12.4" height="15.6" fill="#dde6e6"/>
<rect x="347.2" y="345.4" width="49.3" height="14.4" fill="#787878" stroke="#000" stroke-width="0.8"/>
<rect x="453.5" y="345.4" width="129.25" height="14.4" fill="#787878" stroke="#000" stroke-width="0.8"/>
<rect x="347.2" y="376.4" width="48.8" height="13.7" fill="#000"/>
<rect x="454.6" y="376.4" width="127.4" height="13.7" fill="#000"/>
<rect x="410.3" y="359.7" width="29.7" height="29.2" fill="#000"/>
<rect x="411.6" y="360.8" width="12.6" height="15.4" fill="#dde6e6"/>
<rect x="425.8" y="360.8" width="13" height="15.4" fill="#dde6e6"/>
<rect x="594" y="359.7" width="30" height="29.2" fill="#000"/>
<rect x="595.3" y="360.8" width="12.9" height="15.4" fill="#dde6e6"/>
<rect x="609.8" y="360.8" width="13" height="15.4" fill="#dde6e6"/>
<g fill="none">
<path d="M410.3 390.8L440 390.8" stroke="#000" stroke-width="1"/>
<path d="M594 390.8L633.5 390.8" stroke="#000" stroke-width="1"/>
<path d="M622.5 345.3L633.8 345.3" stroke="#000" stroke-width="1.1" stroke-dasharray="3.6 1.2"/>
<path d="M622.5 350.9L633.8 350.9" stroke="#000" stroke-width="1.1" stroke-dasharray="3.6 1.2"/>
<path d="M349.6 358.4V350.7H360.6" stroke="#000" stroke-width="1.1" stroke-dasharray="3.4 1.1"/>
</g>
<rect x="355.6" y="404.3" width="29.4" height="16.7" fill="#000"/>
<rect x="357" y="405.4" width="15.8" height="15.6" fill="#dde6e6"/>
<rect x="374.4" y="405.4" width="9.6" height="15.6" fill="#dde6e6"/>
<rect x="484.4" y="404.3" width="30.6" height="16.7" fill="#000"/>
<rect x="486.2" y="405.4" width="12.6" height="15.6" fill="#dde6e6"/>
<rect x="500.3" y="405.4" width="12.9" height="15.6" fill="#dde6e6"/>
<rect x="533.1" y="404.3" width="29.9" height="16.7" fill="#000"/>
<rect x="534.5" y="405.4" width="12.8" height="15.6" fill="#dde6e6"/>
<rect x="549" y="405.4" width="12.4" height="15.6" fill="#dde6e6"/>
<rect x="347.2" y="390" width="49.3" height="14.4" fill="#787878" stroke="#000" stroke-width="0.8"/>
<rect x="453.5" y="390" width="129.25" height="14.4" fill="#787878" stroke="#000" stroke-width="0.8"/>
<rect x="347.2" y="421" width="48.8" height="13.7" fill="#000"/>
<rect x="454.6" y="421" width="127.4" height="13.7" fill="#000"/>
<rect x="410.3" y="404.3" width="29.7" height="29.2" fill="#000"/>
<rect x="411.6" y="405.4" width="12.6" height="15.4" fill="#dde6e6"/>
<rect x="425.8" y="405.4" width="13" height="15.4" fill="#dde6e6"/>
<rect x="594" y="404.3" width="30" height="29.2" fill="#000"/>
<rect x="595.3" y="405.4" width="12.9" height="15.4" fill="#dde6e6"/>
<rect x="609.8" y="405.4" width="13" height="15.4" fill="#dde6e6"/>
<g fill="none">
<path d="M410.3 435.4L440 435.4" stroke="#000" stroke-width="1"/>
<path d="M594 435.4L633.5 435.4" stroke="#000" stroke-width="1"/>
<path d="M622.5 389.9L633.8 389.9" stroke="#000" stroke-width="1.1" stroke-dasharray="3.6 1.2"/>
<path d="M622.5 395.5L633.8 395.5" stroke="#000" stroke-width="1.1" stroke-dasharray="3.6 1.2"/>
<path d="M349.6 403V395.3H360.6" stroke="#000" stroke-width="1.1" stroke-dasharray="3.4 1.1"/>
</g>
<rect x="347.2" y="435" width="49.3" height="3.8" fill="#6e6e6e"/>
<rect x="453.5" y="435" width="129.25" height="3.8" fill="#6e6e6e"/>
<rect x="349.8" y="438.8" width="46.7" height="9.2" fill="#fff"/>
<rect x="347.2" y="448.3" width="292.6" height="36.1" fill="#787878"/>
<rect x="344.4" y="484.2" width="295.4" height="5.4" fill="#6b6b6b"/>
<g fill="none">
<path d="M347.2 448.3L637 448.3" stroke="#000" stroke-width="1.2"/>
</g>
<rect x="355.6" y="448.8" width="24.8" height="16.6" fill="#dde6e6" stroke="#000" stroke-width="1.4"/>
<path d="M368.8 448.8V465.4" stroke="#000" stroke-width="1.4" fill="none"/>
<rect x="394.6" y="448.8" width="28.8" height="16.6" fill="#dde6e6" stroke="#222" stroke-width="0.9"/>
<path d="M408.5 448.8V465.4" stroke="#000" stroke-width="0.9" fill="none"/>
<rect x="497.6" y="448.8" width="28.8" height="16.6" fill="#dde6e6" stroke="#000" stroke-width="1.4"/>
<path d="M512.3 448.8V465.4" stroke="#000" stroke-width="1.4" fill="none"/>
<rect x="542" y="448.8" width="28.2" height="16.6" fill="#dde6e6" stroke="#222" stroke-width="0.9"/>
<path d="M556 448.8V465.4" stroke="#000" stroke-width="0.9" fill="none"/>
<rect x="433.8" y="448.6" width="37.4" height="34.6" fill="#fff" stroke="#000" stroke-width="0.8"/>
<rect x="438.2" y="449.4" width="27.2" height="33.2" fill="#dde6e6"/>
<g fill="none">
<path d="M438.2 448.8V482.8H465.4" stroke="#000" stroke-width="1.3"/>
<path d="M457 448.8L457 482.8" stroke="#000" stroke-width="1.5"/>
<path d="M465.6 448.8L465.6 482.8" stroke="#777" stroke-width="0.8"/>
<path d="M455.4 450.5 440 467 455.4 482" stroke="#b8c0c0" stroke-width="0.6" stroke-dasharray="2 1.4"/>
</g>
<rect x="585" y="448.6" width="48.1" height="35.2" fill="#fff"/>
<g fill="none">
<path d="M590.5 483.8V452.3H628.1V483.8" stroke="#000" stroke-width="1.1"/>
<path d="M590.5 453.7L628.1 453.7" stroke="#000" stroke-width="0.8"/>
<path d="M585.1 448.6L585.1 483.8" stroke="#000" stroke-width="0.8"/>
<path d="M592.3 452.3L592.3 483.8" stroke="#000" stroke-width="1"/>
<path d="M598.4 452.3L598.4 483.8" stroke="#666" stroke-width="1"/>
<path d="M604 452.3L604 483.8" stroke="#000" stroke-width="1.2"/>
<path d="M609.6 452.3L609.6 483.8" stroke="#000" stroke-width="1.2"/>
<path d="M615.6 452.3L615.6 483.8" stroke="#666" stroke-width="1"/>
<path d="M621 452.3L621 483.8" stroke="#000" stroke-width="1.2"/>
<path d="M626.3 452.3L626.3 483.8" stroke="#000" stroke-width="1"/>
<path d="M585 483.9L633 483.9" stroke="#000" stroke-width="1"/>
</g>
<g fill="none">
<path d="M349.5 438.8L349.5 483" stroke="#000" stroke-width="1" stroke-dasharray="3.6 1.4"/>
<path d="M633.8 435L633.8 449" stroke="#000" stroke-width="1" stroke-dasharray="3.6 1.4"/>
<path d="M344.7 124L344.7 448" stroke="#8a8a8a" stroke-width="1"/>
<path d="M346.4 124L346.4 448" stroke="#000" stroke-width="1.7"/>
<path d="M346.2 448L346.2 489.5" stroke="#4a4a4a" stroke-width="1.2"/>
<path d="M637.15 122.8L637.15 448" stroke="#000" stroke-width="2"/>
<path d="M637.4 448L637.4 489" stroke="#000" stroke-width="1.2"/>
<path d="M639.7 124L639.7 490" stroke="#222" stroke-width="0.9"/>
<path d="M631 123.2L638 123.2" stroke="#000" stroke-width="1.2"/>
</g>
<rect x="638.3" y="131" width="1" height="317" fill="#fff"/>
<g fill="none" stroke="#000">
<path d="M342.5 486.5L342.5 523.4" stroke="#000" stroke-width="0.9" stroke-dasharray="6.5 1.4"/>
<path d="M350.3 486.5L350.3 523.4" stroke="#000" stroke-width="0.9" stroke-dasharray="6.5 1.4"/>
<path d="M581.3 486.5L581.3 523.4" stroke="#000" stroke-width="0.9" stroke-dasharray="6.5 1.4"/>
<path d="M641.6 486.5L641.6 523.4" stroke="#000" stroke-width="0.9" stroke-dasharray="6.5 1.4"/>
<path d="M342.5 527.3L342.5 562.5" stroke="#000" stroke-width="0.9" stroke-dasharray="6.5 1.4"/>
<path d="M350.3 527.3L350.3 562.5" stroke="#000" stroke-width="0.9" stroke-dasharray="6.5 1.4"/>
<path d="M581.3 527.3L581.3 562.5" stroke="#000" stroke-width="0.9" stroke-dasharray="6.5 1.4"/>
<path d="M641.6 527.3L641.6 562.5" stroke="#000" stroke-width="0.9" stroke-dasharray="6.5 1.4"/>
<path d="M342.5 566.4L342.5 602.3" stroke="#000" stroke-width="0.9" stroke-dasharray="6.5 1.4"/>
<path d="M350.3 566.4L350.3 602.3" stroke="#000" stroke-width="0.9" stroke-dasharray="6.5 1.4"/>
<path d="M581.3 566.4L581.3 602.3" stroke="#000" stroke-width="0.9" stroke-dasharray="6.5 1.4"/>
<path d="M641.6 566.4L641.6 602.3" stroke="#000" stroke-width="0.9" stroke-dasharray="6.5 1.4"/>
<path d="M581.3 602.3L581.3 624.3" stroke="#000" stroke-width="0.9" stroke-dasharray="6.5 1.4"/>
<path d="M584.5 486.5L584.5 620.5" stroke="#000" stroke-width="1.1" stroke-dasharray="6.5 1.4"/>
<path d="M632.8 486.5L632.8 620.5" stroke="#000" stroke-width="0.9" stroke-dasharray="6.5 1.4"/>
<path d="M637.4 489L637.4 624.3" stroke="#000" stroke-width="0.9" stroke-dasharray="6.5 1.4"/>
<path d="M641.6 602.3L641.6 605.9" stroke="#000" stroke-width="0.9" stroke-dasharray="6.5 1.4"/>
<path d="M331 486.5L342.5 486.5" stroke="#000" stroke-width="0.9" stroke-dasharray="5 1.5"/>
<path d="M348.2 486.5L360.6 486.5" stroke="#000" stroke-width="0.9" stroke-dasharray="5 1.5"/>
<path d="M349.6 483L360.6 483" stroke="#000" stroke-width="0.9" stroke-dasharray="5 1.5"/>
<path d="M570.5 486.5L581.3 486.5" stroke="#000" stroke-width="0.9" stroke-dasharray="5 1.5"/>
<path d="M641.6 486.5L652.5 486.5" stroke="#000" stroke-width="0.9" stroke-dasharray="5 1.5"/>
<path d="M330.5 523.4L342.5 523.4" stroke="#000" stroke-width="0.9" stroke-dasharray="5 1.5"/>
<path d="M350.3 523.4L361.3 523.4" stroke="#000" stroke-width="0.9" stroke-dasharray="5 1.5"/>
<path d="M570.5 523.4L581.3 523.4" stroke="#000" stroke-width="0.9" stroke-dasharray="5 1.5"/>
<path d="M641.6 523.4L652.5 523.4" stroke="#000" stroke-width="0.9" stroke-dasharray="5 1.5"/>
<path d="M330.5 527.3L342.5 527.3" stroke="#000" stroke-width="0.9" stroke-dasharray="5 1.5"/>
<path d="M350.3 527.3L361.3 527.3" stroke="#000" stroke-width="0.9" stroke-dasharray="5 1.5"/>
<path d="M570.5 527.3L581.3 527.3" stroke="#000" stroke-width="0.9" stroke-dasharray="5 1.5"/>
<path d="M641.6 527.3L652.5 527.3" stroke="#000" stroke-width="0.9" stroke-dasharray="5 1.5"/>
<path d="M330.5 562.5L342.5 562.5" stroke="#000" stroke-width="0.9" stroke-dasharray="5 1.5"/>
<path d="M350.3 562.5L361.3 562.5" stroke="#000" stroke-width="0.9" stroke-dasharray="5 1.5"/>
<path d="M570.5 562.5L581.3 562.5" stroke="#000" stroke-width="0.9" stroke-dasharray="5 1.5"/>
<path d="M641.6 562.5L652.5 562.5" stroke="#000" stroke-width="0.9" stroke-dasharray="5 1.5"/>
<path d="M330.5 566.4L342.5 566.4" stroke="#000" stroke-width="0.9" stroke-dasharray="5 1.5"/>
<path d="M350.3 566.4L361.3 566.4" stroke="#000" stroke-width="0.9" stroke-dasharray="5 1.5"/>
<path d="M570.5 566.4L581.3 566.4" stroke="#000" stroke-width="0.9" stroke-dasharray="5 1.5"/>
<path d="M641.6 566.4L652.5 566.4" stroke="#000" stroke-width="0.9" stroke-dasharray="5 1.5"/>
<path d="M238.6 602.3L342.5 602.3" stroke="#000" stroke-width="0.9" stroke-dasharray="5 1.5"/>
<path d="M238.6 605.9L342.5 605.9" stroke="#000" stroke-width="0.9" stroke-dasharray="5 1.5"/>
<path d="M350.3 602.3L581.3 602.3" stroke="#000" stroke-width="0.9" stroke-dasharray="5 1.5"/>
<path d="M350.3 605.9L581.3 605.9" stroke="#000" stroke-width="0.9" stroke-dasharray="5 1.5"/>
<path d="M641.6 602.3L745.5 602.3" stroke="#000" stroke-width="0.9" stroke-dasharray="5 1.5"/>
<path d="M637.4 605.9L745.5 605.9" stroke="#000" stroke-width="0.9" stroke-dasharray="5 1.5"/>
<path d="M584.5 620.5L632.8 620.5" stroke="#000" stroke-width="0.9" stroke-dasharray="5 1.5"/>
<path d="M581.3 624.3L637.4 624.3" stroke="#000" stroke-width="0.9" stroke-dasharray="5 1.5"/>
<path d="M345.5 490L345.5 606" stroke="#aaa" stroke-width="0.7"/>
<path d="M347.5 490L347.5 606" stroke="#aaa" stroke-width="0.7"/>
<rect x="590.6" y="491.9" width="37.6" height="31.8" stroke-width="1.8" stroke-dasharray="5 1.4"/>
<rect x="590.6" y="531.3" width="37.6" height="31.9" stroke-width="1.8" stroke-dasharray="5 1.4"/>
<rect x="590.6" y="570.8" width="37.6" height="31.7" stroke-width="1.8" stroke-dasharray="5 1.4"/>
<path d="M237.5 636.3L746 636.3" stroke="#000" stroke-width="0.9"/>
<path d="M238.3 633.8L238.3 638.8" stroke="#333" stroke-width="0.9"/>
<path d="M345.9 633.8L345.9 638.8" stroke="#333" stroke-width="0.9"/>
<path d="M637.5 633.8L637.5 638.8" stroke="#333" stroke-width="0.9"/>
<path d="M745.5 633.8L745.5 638.8" stroke="#333" stroke-width="0.9"/>
</g>
<g fill="none">
<path d="M761 167.5L776.6 167.5" stroke="#000" stroke-width="1"/>
<path d="M765.4 163.4H773.2L769.3 167Z" stroke="#9a9a9a" stroke-width="0.5"/>
<path d="M761 212.5L776.6 212.5" stroke="#000" stroke-width="1"/>
<path d="M765.4 208.1H773.2L769.3 211.7Z" stroke="#9a9a9a" stroke-width="0.5"/>
<path d="M761 256.5L776.6 256.5" stroke="#000" stroke-width="1"/>
<path d="M765.4 252.5H773.2L769.3 256.1Z" stroke="#9a9a9a" stroke-width="0.5"/>
<path d="M761 301.5L776.6 301.5" stroke="#000" stroke-width="1"/>
<path d="M765.4 297.3H773.2L769.3 300.9Z" stroke="#9a9a9a" stroke-width="0.5"/>
<path d="M761 346.5L776.6 346.5" stroke="#000" stroke-width="1"/>
<path d="M765.4 342.1H773.2L769.3 345.7Z" stroke="#9a9a9a" stroke-width="0.5"/>
<path d="M761 390.5L776.6 390.5" stroke="#000" stroke-width="1"/>
<path d="M765.4 386.8H773.2L769.3 390.4Z" stroke="#9a9a9a" stroke-width="0.5"/>
<path d="M761 435.5L776.6 435.5" stroke="#000" stroke-width="1"/>
<path d="M765.4 431.6H773.2L769.3 435.2Z" stroke="#9a9a9a" stroke-width="0.5"/>
<path d="M761 482.5L776.6 482.5" stroke="#000" stroke-width="1"/>
<path d="M765.4 479.1H773.2L769.3 482.7Z" stroke="#9a9a9a" stroke-width="0.5"/>
<path d="M761 522.5L776.6 522.5" stroke="#000" stroke-width="1"/>
<path d="M765.4 519.1H773.2L769.3 522.7Z" stroke="#9a9a9a" stroke-width="0.5"/>
<path d="M761 562.5L776.6 562.5" stroke="#000" stroke-width="1"/>
<path d="M765.4 558.6H773.2L769.3 562.2Z" stroke="#9a9a9a" stroke-width="0.5"/>
<path d="M761 602.5L776.6 602.5" stroke="#000" stroke-width="1"/>
<path d="M765.4 598.1H773.2L769.3 601.7Z" stroke="#9a9a9a" stroke-width="0.5"/>
</g>
<g font-family="Liberation Sans, sans-serif">
<text x="764.8" y="163.1" font-size="3.3" fill="#9a9a9a" textLength="10" lengthAdjust="spacingAndGlyphs">155.88</text>
<text x="779.4" y="167" font-size="3.8" font-weight="bold" fill="#444" textLength="30" lengthAdjust="spacingAndGlyphs">PISO DA COBERTURA</text>
<text x="764.8" y="207.8" font-size="3.3" fill="#9a9a9a" textLength="10" lengthAdjust="spacingAndGlyphs">153.00</text>
<text x="779.4" y="211.7" font-size="3.8" font-weight="bold" fill="#444" textLength="9.4" lengthAdjust="spacingAndGlyphs">PISO 6</text>
<text x="764.8" y="252.2" font-size="3.3" fill="#9a9a9a" textLength="10" lengthAdjust="spacingAndGlyphs">150.12</text>
<text x="779.4" y="256.1" font-size="3.8" font-weight="bold" fill="#444" textLength="9.4" lengthAdjust="spacingAndGlyphs">PISO 5</text>
<text x="764.8" y="297" font-size="3.3" fill="#9a9a9a" textLength="10" lengthAdjust="spacingAndGlyphs">147.24</text>
<text x="779.4" y="300.9" font-size="3.8" font-weight="bold" fill="#444" textLength="9.4" lengthAdjust="spacingAndGlyphs">PISO 4</text>
<text x="764.8" y="341.8" font-size="3.3" fill="#9a9a9a" textLength="10" lengthAdjust="spacingAndGlyphs">144.36</text>
<text x="779.4" y="345.7" font-size="3.8" font-weight="bold" fill="#444" textLength="9.4" lengthAdjust="spacingAndGlyphs">PISO 3</text>
<text x="764.8" y="386.5" font-size="3.3" fill="#9a9a9a" textLength="10" lengthAdjust="spacingAndGlyphs">141.48</text>
<text x="779.4" y="390.4" font-size="3.8" font-weight="bold" fill="#444" textLength="9.4" lengthAdjust="spacingAndGlyphs">PISO 2</text>
<text x="764.8" y="431.3" font-size="3.3" fill="#9a9a9a" textLength="10" lengthAdjust="spacingAndGlyphs">138.60</text>
<text x="779.4" y="435.2" font-size="3.8" font-weight="bold" fill="#444" textLength="9.4" lengthAdjust="spacingAndGlyphs">PISO 1</text>
<text x="764.8" y="478.8" font-size="3.3" fill="#9a9a9a" textLength="10" lengthAdjust="spacingAndGlyphs">135.50</text>
<text x="779.4" y="482.7" font-size="3.8" font-weight="bold" fill="#444" textLength="9.4" lengthAdjust="spacingAndGlyphs">PISO 0</text>
<text x="764.8" y="518.8" font-size="3.3" fill="#9a9a9a" textLength="10" lengthAdjust="spacingAndGlyphs">132.90</text>
<text x="779.4" y="522.7" font-size="3.8" font-weight="bold" fill="#444" textLength="11" lengthAdjust="spacingAndGlyphs">PISO -1</text>
<text x="764.8" y="558.3" font-size="3.3" fill="#9a9a9a" textLength="10" lengthAdjust="spacingAndGlyphs">130.30</text>
<text x="779.4" y="562.2" font-size="3.8" font-weight="bold" fill="#444" textLength="11" lengthAdjust="spacingAndGlyphs">PISO -2</text>
<text x="764.8" y="597.8" font-size="3.3" fill="#9a9a9a" textLength="10" lengthAdjust="spacingAndGlyphs">127.70</text>
<text x="779.4" y="601.7" font-size="3.8" font-weight="bold" fill="#444" textLength="11" lengthAdjust="spacingAndGlyphs">PISO -3</text>
<text x="400.6" y="98.8" font-size="3.6" font-weight="bold" fill="#222" textLength="30.4" lengthAdjust="spacingAndGlyphs">PAINÉIS SOLARES</text>
<text x="283.8" y="636.2" font-size="4" font-weight="bold" fill="#333" textLength="16.2" lengthAdjust="spacingAndGlyphs">LOTE 7</text>
<text x="483" y="636.2" font-size="4" font-weight="bold" fill="#333" textLength="16.2" lengthAdjust="spacingAndGlyphs">LOTE 6</text>
<text x="684.5" y="636.2" font-size="4" font-weight="bold" fill="#333" textLength="15.5" lengthAdjust="spacingAndGlyphs">LOTE 5</text>
<text x="481" y="641.6" font-size="3.6" fill="#222" font-weight="bold" textLength="25" lengthAdjust="spacingAndGlyphs">ALÇADO NORTE</text>
<text x="276.3" y="665.6" font-size="3.6" fill="#9a9a9a" textLength="10" lengthAdjust="spacingAndGlyphs">NOTA:</text>
<text x="271.3" y="674" font-size="5.6" font-weight="bold" fill="#484848" textLength="208.5" lengthAdjust="spacingAndGlyphs">– ESTE EDIFÍCIO DESTINA–SE A SER CONSTITUÍDO EM REGIME DE PROPRIEDADE HORIZONTAL</text>
<text x="423.5" y="171.5" font-size="2.8" fill="#8a8a8a">2</text>
<text x="519" y="191" font-size="2.8" fill="#8a8a8a">2</text>
<text x="450.5" y="187" font-size="2.8" fill="#8a8a8a">1</text>
<text x="566" y="203" font-size="2.8" fill="#8a8a8a">4</text>
<text x="609" y="219" font-size="2.8" fill="#8a8a8a">1</text>
<text x="403" y="296" font-size="2.8" fill="#8a8a8a">4</text>
<text x="563" y="281" font-size="2.8" fill="#8a8a8a">1</text>
<text x="517" y="323" font-size="2.8" fill="#8a8a8a">2</text>
<text x="610" y="354" font-size="2.8" fill="#8a8a8a">2</text>
<text x="394" y="369" font-size="2.8" fill="#8a8a8a">4</text>
<text x="521" y="441" font-size="2.8" fill="#8a8a8a">3</text>
<text x="415.5" y="458" font-size="2.8" fill="#8a8a8a">4</text>
<text x="550" y="457.5" font-size="2.8" fill="#8a8a8a">4</text>
<text x="450.5" y="463" font-size="2.8" fill="#8a8a8a">8</text>
<text x="606" y="464" font-size="2.8" fill="#8a8a8a">9</text>
<text x="424" y="143" font-size="2.8" fill="#8a8a8a">6</text>
<text x="601" y="142" font-size="2.8" fill="#8a8a8a">6</text>
<text x="392" y="474" font-size="2.8" fill="#8a8a8a">1</text>
<text x="533" y="466.5" font-size="2.8" fill="#8a8a8a">3</text>
<text x="443" y="479.6" font-size="2.6" fill="#8a8a8a">135.50 135.27</text>
<text x="597" y="480" font-size="2.6" fill="#666">135.50 135.27</text>
</g>
<g font-family="Liberation Sans, sans-serif">
<text x="870" y="497.8" font-size="4.2" fill="#222" textLength="36.6" lengthAdjust="spacingAndGlyphs" font-weight="bold">LEGENDA:</text>
<path d="M870 499.2H906.6" stroke="#000" stroke-width="0.7"/>
<text x="870.39" y="506.66" font-size="3.9" fill="#a0a0a0">1.</text>
<text x="876.5" y="506.66" font-size="4" fill="#606060" textLength="117.93" lengthAdjust="spacingAndGlyphs">REBOCO PINTADO A TINTA PLÁSTICA COR BRANCA RAL9010;</text>
<text x="870.39" y="511.25" font-size="3.9" fill="#a0a0a0">2.</text>
<text x="876.5" y="511.25" font-size="4" fill="#606060" textLength="143.14" lengthAdjust="spacingAndGlyphs">REBOCO PINTADO A TINTA PLÁSTICA COR CINZA CLARO NCS4000–N8500;</text>
<text x="870.39" y="515.53" font-size="3.9" fill="#a0a0a0">3.</text>
<text x="876.5" y="515.53" font-size="4" fill="#606060" textLength="108.77" lengthAdjust="spacingAndGlyphs">PEDRA EXTERIOR/ PAINEL COM ACABAMENTO AMACIADO;</text>
<text x="870.39" y="520.41" font-size="3.9" fill="#a0a0a0">4.</text>
<text x="876.5" y="520.41" font-size="4" fill="#606060" textLength="110.3" lengthAdjust="spacingAndGlyphs">CAIXILHARIA EXTERIOR EM ALUMÍNIO TERMOLACADO NA</text>
<text x="875.89" y="525" font-size="4" fill="#606060" textLength="142.99" lengthAdjust="spacingAndGlyphs">COR CINZA CHUMBO RAL 7011,COM VIDROS DUPLOS COLORLIT ANTHELIO</text>
<text x="875.89" y="529.58" font-size="4" fill="#606060" textLength="152.92" lengthAdjust="spacingAndGlyphs">ESMERALDA COM ESP. DE 6MM NO EXTERIOR E 5MM INCOLOR NO INTERIOR;</text>
<text x="870.39" y="533.09" font-size="3.9" fill="#a0a0a0">5.</text>
<text x="876.5" y="533.09" font-size="4" fill="#606060" textLength="88.91" lengthAdjust="spacingAndGlyphs">GUARDA EM AÇO INOX COM VIDRO INCOLOR;</text>
<text x="870.39" y="538.75" font-size="3.9" fill="#a0a0a0">6.</text>
<text x="876.5" y="538.75" font-size="4" fill="#606060" textLength="140.85" lengthAdjust="spacingAndGlyphs">COBERTURA EM PAINEL SANDWICH "HIACO PO–1000 PERFILADO", COR</text>
<text x="875.89" y="543.33" font-size="4" fill="#606060" textLength="51.33" lengthAdjust="spacingAndGlyphs">CINZA METÁLICO REF. 939;</text>
<text x="870.39" y="547.61" font-size="3.9" fill="#a0a0a0">7.</text>
<text x="876.5" y="547.61" font-size="4" fill="#606060" textLength="130.92" lengthAdjust="spacingAndGlyphs">CAIXILHO EM ALUMÍNIO LACADO NA COR CINZA CHUMBO RAL 7011;</text>
<text x="870.39" y="552.19" font-size="3.9" fill="#a0a0a0">8.</text>
<text x="876.5" y="552.19" font-size="4" fill="#606060" textLength="142.38" lengthAdjust="spacingAndGlyphs">PORTA DE ENTRADA EM ALUMÍNIO LACADO NA COR CINZA CHUMBO RAL</text>
<text x="875.89" y="556.47" font-size="4" fill="#606060" textLength="53.62" lengthAdjust="spacingAndGlyphs">7011 COM VIDRO INCOLOR;</text>
<text x="870.39" y="561.05" font-size="3.9" fill="#a0a0a0">9.</text>
<text x="876.5" y="561.05" font-size="4" fill="#606060" textLength="133.97" lengthAdjust="spacingAndGlyphs">PORTÃO AUTOMÁTICO INCORPORADO NO MONTACARROS EM CHAPA</text>
<text x="879.1" y="565.63" font-size="4" fill="#606060" textLength="106.94" lengthAdjust="spacingAndGlyphs">METÁLICA PINTADA NA COR CINZA CHUMBO RAL 7011;</text>
<text x="870.39" y="570.52" font-size="3.9" fill="#a0a0a0">10.</text>
<text x="879.1" y="570.52" font-size="4" fill="#606060" textLength="141.31" lengthAdjust="spacingAndGlyphs">VÃO TIPO VELUX EM ALUMÍNIO TERMOLACADO NA COR CINZA CHUMBO</text>
<text x="879.1" y="574.8" font-size="4" fill="#606060" textLength="63.4" lengthAdjust="spacingAndGlyphs">RAL 7011, COM VIDRO INCOLOR</text>
<text x="870.39" y="581.52" font-size="3.9" fill="#a0a0a0">11.</text>
<text x="879.1" y="581.52" font-size="4" fill="#606060" textLength="127.56" lengthAdjust="spacingAndGlyphs">GUARDA EM FERRO PINTADA NA COR CINZA CHUMBO RAL 7011;</text>
</g>
<rect x="777.1" y="605.4" width="86.4" height="50.9" fill="none" stroke="#000" stroke-width="1.1"/>
<rect x="777.1" y="659.5" width="86.4" height="27.9" fill="none" stroke="#000" stroke-width="1.1"/>
<rect x="866" y="605.4" width="172.6" height="9" fill="none" stroke="#000" stroke-width="1.1"/>
<path d="M895 605.4V614.4" stroke="#000" stroke-width="1" fill="none"/>
<path d="M1009.6 605.4V614.4" stroke="#000" stroke-width="1" fill="none"/>
<rect x="866" y="617.6" width="172.6" height="11.8" fill="none" stroke="#000" stroke-width="1.1"/>
<rect x="866" y="632.2" width="172.6" height="14.4" fill="none" stroke="#000" stroke-width="1.1"/>
<rect x="866" y="649.4" width="172.6" height="6.9" fill="none" stroke="#000" stroke-width="1.1"/>
<rect x="866" y="659.5" width="139.7" height="17.8" fill="none" stroke="#000" stroke-width="1.1"/>
<rect x="866" y="680.1" width="139.7" height="7.3" fill="none" stroke="#000" stroke-width="1.1"/>
<path d="M901.5 680.1V687.4" stroke="#000" stroke-width="1" fill="none"/>
<path d="M938.7 680.1V687.4" stroke="#000" stroke-width="1" fill="none"/>
<path d="M974.5 680.1V687.4" stroke="#000" stroke-width="1" fill="none"/>
<rect x="1009.1" y="659.5" width="29.5" height="27.9" fill="none" stroke="#000" stroke-width="1.1"/>
<path d="M826.2 613.6Q831.6 612.6 832.6 609H847V627.8Q847 629.8 845 629.8H826.2Z" fill="#a8a8a8"/>
<path d="M833.6 612V629.8M836.4 612V629.8" stroke="#b6b6b6" stroke-width="0.8"/>
<circle cx="828.4" cy="608.4" r="1.9" fill="#a8a8a8"/>
<g font-family="Liberation Sans, sans-serif">
<text x="789.3" y="641.6" font-size="14.2" fill="#000" textLength="61.8" lengthAdjust="spacingAndGlyphs" font-weight="bold" font-family="Liberation Serif, serif">Ideia Matriz</text>
<text x="790" y="647.6" font-size="4.6" fill="#000" textLength="61" lengthAdjust="spacingAndGlyphs" font-weight="bold">Arquitectura e Urbanismo</text>
<text x="779" y="652" font-size="2.6" fill="#222" textLength="82" lengthAdjust="spacingAndGlyphs" font-weight="bold">Rua de Goa, 638 Telheiras Lote 1 r/c dto · 1600 Lisboa</text>
<text x="779" y="654.6" font-size="2.6" fill="#222" textLength="82" lengthAdjust="spacingAndGlyphs" font-weight="bold">Telf 217 102 170 Fax 217 102 179 · ideiamatriz@mail.telepac.pt</text>
<text x="868" y="609.8" font-size="3.1" fill="#111" textLength="11.7" lengthAdjust="spacingAndGlyphs" font-weight="bold">REVISÃO</text>
<text x="897" y="609.8" font-size="3.1" fill="#111" textLength="11.7" lengthAdjust="spacingAndGlyphs" font-weight="bold">DESCRIÇÃO</text>
<text x="1011.5" y="609.8" font-size="3.1" fill="#111" textLength="6.5" lengthAdjust="spacingAndGlyphs" font-weight="bold">DATA</text>
<text x="868" y="621.8" font-size="3.1" fill="#111" textLength="16.25" lengthAdjust="spacingAndGlyphs" font-weight="bold">REQUERENTE</text>
<text x="868" y="636.4" font-size="3.1" fill="#111" textLength="8.45" lengthAdjust="spacingAndGlyphs" font-weight="bold">LOCAL</text>
<text x="868" y="653.6" font-size="3.1" fill="#111" textLength="6.5" lengthAdjust="spacingAndGlyphs" font-weight="bold">FASE</text>
<text x="868" y="663.6" font-size="3.1" fill="#111" textLength="5.85" lengthAdjust="spacingAndGlyphs" font-weight="bold">TÍTULO</text>
<text x="868" y="685" font-size="3.1" fill="#111" textLength="14.3" lengthAdjust="spacingAndGlyphs" font-weight="bold">DESENHOU</text>
<text x="903.5" y="685" font-size="3.1" fill="#111" textLength="6.5" lengthAdjust="spacingAndGlyphs" font-weight="bold">DATA</text>
<text x="940.5" y="685" font-size="3.1" fill="#111" textLength="7.8" lengthAdjust="spacingAndGlyphs" font-weight="bold">ESCALA</text>
<text x="976.5" y="685" font-size="3.1" fill="#111" textLength="16.9" lengthAdjust="spacingAndGlyphs" font-weight="bold">FICHEIRO</text>
<text x="919" y="684.8" font-size="3" fill="#222" textLength="11" lengthAdjust="spacingAndGlyphs" font-weight="bold">FEV/20</text>
<text x="961" y="684.8" font-size="3" fill="#bbb" textLength="10" lengthAdjust="spacingAndGlyphs">1/100</text>
<text x="951.5" y="623.2" font-size="5" fill="#a8a8a8" textLength="56" lengthAdjust="spacingAndGlyphs" text-anchor="middle">J. DIAS &amp; DIAS, S.A.</text>
<text x="952" y="628.2" font-size="3.4" fill="#3a3a3a" textLength="96" lengthAdjust="spacingAndGlyphs" text-anchor="middle">AV. DR. FRANCISCO SÁ CARNEIRO, Nº5, 3ºD, ODIVELAS</text>
<text x="952.4" y="637.8" font-size="5" fill="#555" textLength="89.8" lengthAdjust="spacingAndGlyphs" text-anchor="middle">AVENIDA ELIAS GARCIA – LOTE 6</text>
<text x="951.5" y="644" font-size="3.6" fill="#555" textLength="20" lengthAdjust="spacingAndGlyphs" text-anchor="middle">AMADORA</text>
<text x="952" y="654.6" font-size="3.9" fill="#444" textLength="31.2" lengthAdjust="spacingAndGlyphs" text-anchor="middle">ARQUITETURA</text>
<text x="936.2" y="669.8" font-size="5.4" fill="#5a5a5a" textLength="40.5" lengthAdjust="spacingAndGlyphs" text-anchor="middle">ALÇADO NORTE</text>
<text x="1024" y="678.4" font-size="14" fill="#c4c4c4" textLength="12" lengthAdjust="spacingAndGlyphs" text-anchor="middle">11</text>
<text x="779" y="663" font-size="2.8" fill="#333" textLength="13" lengthAdjust="spacingAndGlyphs">ARQUITECTO</text>
<text x="779" y="668.6" font-size="5" fill="#333" textLength="37" lengthAdjust="spacingAndGlyphs">LUÍS TEIXEIRA</text>
<text x="779" y="684.8" font-size="3.6" fill="#333" textLength="41" lengthAdjust="spacingAndGlyphs">Nº INSC. ORDEM ARQ.</text>
<text x="835.5" y="684.8" font-size="3.8" fill="#aaa" textLength="25.5" lengthAdjust="spacingAndGlyphs">1875 – S</text>
</g>
<text transform="translate(209.5 690) rotate(-90)" font-family="Liberation Sans, sans-serif" font-size="3" font-weight="bold" fill="#2a2a2a" textLength="429" lengthAdjust="spacingAndGlyphs">C:\PROJECTOS\AMADORA – ELIAS GARCIA\LOTE 6\LICENCIAMENTO\ARQUITECTURA\ALTERAÇÕES\LOTE 6 – ALÇADOS.DWG · 11–ALÇADO NORTE · PLOTADO EM FEV/2020 · ESCALA 1/100 · IDEIA MATRIZ</text>
</g>
</svg>
<!-- ===== TITLE BAR ===== -->
<div id="titlebar"></div>
<div id="toolbar"></div>
<div id="tab"></div>
<svg style="left:0;top:0" width="1280" height="77" viewBox="0 0 1280 77" fill="none" stroke="#e0e0e0" stroke-width="1.5" stroke-linecap="round" stroke-linejoin="round">
  <!-- hamburger -->
  <path d="M15.5 13.1H27.5M15.5 17.8H27.5M15.5 22.5H27.5" stroke="#c2c2c2" stroke-width="1.8" stroke-linecap="butt"/>
  <!-- home -->
  <path d="M87 17.6 94.5 10.8 102 17.6M89 16.6V23.4H92.6V19.2H96.4V23.4H100V16.6" stroke-width="1.8"/>
  <!-- star -->
  <path d="M132 10.8 134.2 15.6 139.4 16.2 135.5 19.7 136.6 24.8 132 22.2 127.4 24.8 128.5 19.7 124.6 16.2 129.8 15.6Z" stroke-width="1.9"/>
  <!-- tab close -->
  <path d="M291.4 14.4 298.8 21.8M298.8 14.4 291.4 21.8" stroke-width="1.9"/>
  <!-- plus -->
  <path d="M323.6 17.6H332M327.8 13.4V21.8" stroke-width="1.7"/>
  <!-- help -->
  <circle cx="937.5" cy="17.6" r="7" stroke-width="1.5"/>
  <path d="M935.6 15.6C935.6 13.2 939.6 13.2 939.6 15.6 939.6 17 937.6 17.2 937.6 18.8" stroke-width="1.4"/>
  <circle cx="937.6" cy="21.2" r="0.9" fill="#e0e0e0" stroke="none"/>
  <!-- bell (dim) -->
  <path d="M962 21.6C963.4 20.4 963.2 18.6 963.2 16.4 963.2 13.4 965 11.4 967.6 11.4 970.2 11.4 972 13.4 972 16.4 972 18.6 971.8 20.4 973.2 21.6ZM966.2 23.8Q967.6 25 969 23.8" stroke="#4a4a4a" stroke-width="1.5"/>
  <!-- apps -->
  <g fill="#cfcfcf" stroke="none">
    <circle cx="992.600" cy="12.600" r="1.500"/><circle cx="997.400" cy="12.600" r="1.500"/>
    <circle cx="992.6" cy="17.5" r="1.8"/><circle cx="997.4" cy="17.5" r="1.8"/><circle cx="1002.2" cy="17.5" r="1.8"/>
    <circle cx="992.6" cy="22.4" r="1.8"/><circle cx="997.4" cy="22.4" r="1.8"/><circle cx="1002.2" cy="22.4" r="1.8"/>
  </g>
  <circle cx="1003" cy="11.4" r="3" fill="#2f8cf0" stroke="none"/>
  <!-- window controls -->
  <path d="M1159.5 16.2H1171.5" stroke-width="1.3" stroke="#f0f0f0"/>
  <path d="M1207.600 12.600H1213.800Q1214.800 12.600 1214.800 13.600V20.400Q1214.800 21.400 1213.800 21.400H1207.600Q1206.600 21.400 1206.600 20.400V13.600Q1206.600 12.600 1207.600 12.600ZM1209.600 12.400V10.800Q1209.600 9.800 1210.600 9.800H1216.800Q1217.800 9.800 1217.800 10.800V17.600Q1217.800 18.600 1216.800 18.600H1215" stroke-width="1.200" stroke="#f0f0f0"/>
  <path d="M1252 10 1262.600 20.600M1262.600 10 1252 20.600" stroke-width="1.300" stroke="#f0f0f0"/>
  <!-- search -->
  <circle cx="827.6" cy="53.6" r="5.4" stroke-width="1.6"/>
  <path d="M831.6 57.8 836 62.2" stroke-width="1.8"/>
  <!-- separators -->
  <path d="M855.5 48V62.5M982.5 48V62.5" stroke="#555" stroke-width="1"/>
  <!-- save (dim) -->
  <path d="M872.8 48.6H883.6L886.4 51.4V62H872.8ZM876 48.8V53H882.6V48.8M875.8 62V56.6H883.2V62" stroke="#666" stroke-width="1.5"/>
  <!-- cloud upload -->
  <path d="M914.6 60.4C909.6 60.6 909.8 54.2 914 54.4 914 49.4 920.6 47.4 922.6 52.6 927.6 51.6 928.6 59.8 923.2 60.4" stroke-width="1.7"/>
  <path d="M918.8 64.2V55.4M915.4 58.4 918.8 55 922.2 58.4" stroke-width="1.7"/>
  <!-- print -->
  <path d="M954.2 51.4V47.8H963.6V51.4M954 60.2H951.6V51.6H966.4V60.2H964M954.2 56.6H963.6V63.4H954.2Z" stroke-width="1.6"/>
  <!-- share/request -->
  <path d="M1008 61.2C1001.4 63 997.2 57.4 998.4 52.6 999.8 47.2 1006.6 45.6 1010.6 49.4 1013 51.8 1013.4 54.6 1012.6 56.6" stroke-width="1.5"/>
  <circle cx="1005.6" cy="52.4" r="2.6" stroke-width="1.4"/>
  <path d="M1000.8 60C1001.4 56.8 1004 56.4 1005.6 56.4 1007 56.4 1008.2 56.6 1009 57.4" stroke-width="1.4"/>
  <path d="M1009.2 61.6H1015.6M1012.4 58.4V64.8" stroke-width="1.5"/>
  <!-- link -->
  <g transform="rotate(-45 1045 55.200)" stroke-width="1.700">
    <path d="M1044 52.400H1040.200Q1037.400 52.400 1037.400 55.200 1037.400 58 1040.200 58H1044.600Q1046.600 58 1047.200 56.400"/>
    <path d="M1046 58H1049.800Q1052.600 58 1052.600 55.200 1052.600 52.400 1049.800 52.400H1045.400Q1043.400 52.400 1042.800 54"/>
  </g>
  <!-- mail -->
  <path d="M1077.400 49.200H1091.200V61H1077.400ZM1077.800 49.800 1084.300 56.200 1090.800 49.800M1077.800 60.400 1081.800 56.400M1090.800 60.400 1086.800 56.400" stroke-width="1.500"/>
</svg>
<div class="t" style="left:35.5px;top:12px;font-size:11px;color:#d8d8d8;letter-spacing:0.1px">Menu</div>
<div class="t" style="left:147.5px;top:11px;font-size:13.4px;color:#f2f2f2">LOTE 6 - projecto.pdf</div>
<div id="criar"></div>
<div class="t" style="left:342.500px;top:11.800px;font-size:11.500px;color:#d8d8d8">Criar</div>
<div class="t" style="left:1028px;top:8.500px;font-size:16px;letter-spacing:0.320px;color:#f4f4f4">Fazer logon</div>
<div class="t" style="left:14.5px;top:48.5px;font-size:13.280px;color:#ececec">Todas as ferramentas</div>
<div class="t" style="left:164.5px;top:48.5px;font-size:13.280px;color:#ececec">Editar</div>
<div class="t" style="left:222px;top:48.5px;font-size:13.280px;color:#ececec">Converter</div>
<div class="t" style="left:303px;top:48.5px;font-size:13.280px;color:#ececec">Assinar eletronicamente</div>
<div class="t" style="left:635px;top:48.500px;font-size:13.250px;color:#ececec">Localizar texto ou ferramentas</div>
<!-- AI assistant button -->
<div class="abs" style="left:1109px;top:40px;width:156px;height:30px;border-radius:15px;background:linear-gradient(90deg,#f4694c 0%,#ea5c68 20%,#c962a4 42%,#9a6cd8 60%,#6c70ee 78%,#5a6cf4 100%)"></div>
<svg style="left:1118px;top:45px" width="22" height="22" viewBox="0 0 22 22" fill="none" stroke="#fff" stroke-width="1.6" stroke-linejoin="round" stroke-linecap="round">
  <path d="M9.500 4.200H4.600Q3.400 4.200 3.400 5.400V13.400Q3.400 14.600 4.600 14.600H6.200V17.800L9.600 14.600H15Q16.200 14.600 16.200 13.400V10.600"/>
  <path d="M15.200 1.600 16.200 4.400 19 5.400 16.200 6.400 15.200 9.200 14.200 6.400 11.400 5.400 14.200 4.400Z" fill="#fff" stroke-width="0.6"/>
  <path d="M9.200 8.200 9.800 9.600 11.200 10.200 9.800 10.800 9.200 12.200 8.600 10.800 7.200 10.200 8.600 9.600Z" fill="#fff" stroke-width="0.4"/>
</svg>
<div class="t" style="left:1143.5px;top:48.5px;font-size:13.200px;font-weight:bold;color:#fff;letter-spacing:0.280px">Assistente de IA</div>
<!-- ===== SCROLLBAR + RIGHT PANEL ===== -->
<div id="sbtrack"></div>
<div id="sbthumb"></div>
<div id="rpanel"></div>
<svg style="left:1219px;top:77px" width="61" height="614" viewBox="1219 77 61 614" fill="none" stroke="#dcdcdc" stroke-width="1.5" stroke-linecap="round" stroke-linejoin="round">
  <path d="M1223.800 88 1226.800 85 1229.800 88" stroke="#8e8e8e" stroke-width="2"/>
  <path d="M1223.800 681.600 1226.800 684.600 1229.800 681.600" stroke="#8e8e8e" stroke-width="2"/>
  <!-- AI summary icon (lilac) -->
  <g stroke="#b9b6f2">
    <path d="M1258 94.600H1251.400Q1250.200 94.600 1250.200 95.800V106.200Q1250.200 107.400 1251.400 107.400H1263.400Q1264.600 107.400 1264.600 106.200V101.600" stroke-width="1.500"/>
    <path d="M1253.200 98.600H1256.600M1253.200 101.200H1259.600M1253.200 103.800H1256" stroke-width="1.300"/>
    <path d="M1263 92.200 1263.900 94.700 1266.400 95.600 1263.900 96.500 1263 99 1262.100 96.500 1259.600 95.600 1262.100 94.700Z" fill="#b9b6f2" stroke-width="0.800"/>
  </g>
  <path d="M1247.500 122.200H1269" stroke="#4e4e4e" stroke-width="1"/>
  <!-- comments -->
  <path d="M1259.400 137.600C1264.600 137.600 1266.400 143.800 1262.600 146.600L1262.600 146.800H1258.200C1252.800 146.800 1252 139.200 1259.400 137.600Z" stroke-width="1.500"/>
  <path d="M1252.800 141.200C1249.200 143.400 1250.200 149.800 1255.800 149.800H1260.400Q1262.600 149.600 1264 148.200" stroke-width="1.500"/>
  <path d="M1257.400 141.600H1261.400M1257.400 143.800H1260" stroke-width="1.100"/>
  <!-- bookmark -->
  <path d="M1250.800 171.200H1258.600V186.600L1254.700 182.800 1250.800 186.600Z" stroke-width="1.600"/>
  <path d="M1261.400 174H1266M1261.400 177.200H1266M1261.400 180.400H1266" stroke-width="1.300"/>
  <!-- pages -->
  <path d="M1253.800 219.200H1251.800Q1250.800 219.200 1250.800 218.200V208.600Q1250.800 207.600 1251.800 207.600H1257.800" stroke-width="1.500"/>
  <path d="M1255.200 210.600H1261L1264.400 214V222Q1264.400 223 1263.400 223H1255.200Q1254.200 223 1254.200 222V211.600Q1254.200 210.600 1255.200 210.600Z" stroke-width="1.500"/>
  <!-- page number box -->
  <rect x="1242.500" y="426.500" width="30" height="29" rx="3" fill="#1e1e1e" stroke="#5a5a5a" stroke-width="1"/>
  <g transform="translate(1 0)">
  <!-- chevrons -->
  <path d="M1253.600 510 1257.400 506.200 1261.200 510" stroke-width="2.2"/>
  <path d="M1253.600 537.400 1257.400 541.200 1261.200 537.400" stroke-width="2.2"/>
  <path d="M1243 556.500H1272" stroke="#4e4e4e" stroke-width="1"/>
  <!-- rotate -->
  <path d="M1263.400 572.200C1260.200 567 1251.600 569.200 1251.600 575.600 1251.600 582.400 1260.800 583.800 1263.200 578.200" stroke-width="1.600"/>
  <path d="M1263.800 568.200V572.800H1259.200" stroke-width="1.600"/>
  <!-- fit page -->
  <path d="M1252.600 600.600H1259.800L1263.600 604.400V615.400H1252.600Z" stroke-width="1.500"/>
  <path d="M1255.400 606.200H1258V608.800M1260.800 612.600H1258.200V610" stroke-width="1.200"/>
  <path d="M1266.600 612.800V616.400H1263Z" fill="#dcdcdc" stroke="none"/>
  <!-- zoom in -->
  <circle cx="1256.400" cy="640.600" r="5.200" stroke-width="1.600"/>
  <path d="M1260.400 644.600 1264.400 648.600" stroke-width="1.900"/>
  <path d="M1253.800 640.600H1259M1256.400 638V643.200" stroke-width="1.300"/>
  <!-- zoom out -->
  <circle cx="1256.400" cy="674.200" r="5.200" stroke-width="1.600"/>
  <path d="M1260.400 678.200 1264.400 682.200" stroke-width="1.900"/>
  <path d="M1253.800 674.200H1259" stroke-width="1.300"/>
</g>
</svg>
<div class="t" style="left:1242.500px;top:434px;width:30px;text-align:center;font-size:12.500px;color:#f0f0f0">11</div>
<div class="t" style="left:1242.500px;top:467px;width:30px;text-align:center;font-size:12.500px;color:#f0f0f0">14</div>

<!-- ===== LEFT FLOATING TOOL PANEL ===== -->
<div id="lpanel"></div>
<div class="abs" style="left:15.5px;top:303px;width:29.5px;height:3.500px;border-radius:2px;background:#6a6a6a"></div>
<div class="abs" style="left:15px;top:314px;width:30px;height:30px;border-radius:3px;background:#1473e6"></div>
<svg style="left:11px;top:299px" width="38" height="274" viewBox="11 299 38 274" fill="none" stroke="#d6d6d6" stroke-width="1.500" stroke-linecap="round" stroke-linejoin="round">
  <!-- cursor -->
  <path d="M26 320.600V335.200L29.400 332 31.800 337.200 34 336.200 31.600 331.200H36.200Z" fill="#fff" stroke="none"/>
  <g fill="#d6d6d6" stroke="none">
    <path d="M41.2 336.0V340.6H36.6Z" fill="#fff"/>
    <path d="M41.2 373.0V377.6H36.6Z"/>
    <path d="M41.2 410.6V415.2H36.6Z"/>
    <path d="M41.2 448.2V452.8H36.6Z"/>
    <path d="M41.2 485.8V490.4H36.6Z"/>
    <path d="M41.2 523.4V528.0H36.6Z"/>
    <circle cx="24.600" cy="553.800" r="1"/><circle cx="30" cy="553.800" r="1"/><circle cx="35.400" cy="553.800" r="1"/>
  </g>
  <!-- comment bubble -->
  <path d="M30.200 358.600C34.800 358.600 37.800 361.800 37.800 366V373.600H30.200C25.600 373.600 22.600 370.400 22.600 366 22.600 361.800 25.600 358.600 30.200 358.600Z" stroke-width="1.600"/>
  <path d="M26.800 364.400H33.600M26.800 367.200H31.600" stroke-width="1.300"/>
  <!-- highlighter -->
  <path d="M26.400 407.400 34.400 397.800Q35.800 396.600 37 397.800 38 399 37 400.200L29.200 409.600ZM26.400 407.400 25 410.800 29.200 409.600" stroke-width="1.500"/>
  <path d="M22.600 411.200 24.600 411.400" stroke-width="1.800"/>
  <path d="M30.600 411.600H37.600" stroke="#8a8a8a" stroke-width="2.200"/>
  <!-- freehand loop -->
  <path d="M35.400 434.600C30 433.400 22.600 435.800 23.200 441.600 23.800 447 33.400 446.600 35.400 442.600 36.600 439.800 32.400 439 31.200 441.600 30 444.600 32.800 446.800 35.600 447.200" stroke-width="1.600"/>
  <!-- text box -->
  <path d="M22.400 470.600H37.600V487.200H22.400Z" stroke-width="1.500" stroke-dasharray="2.200 1.600" stroke-linecap="butt"/>
  <path d="M26.200 484 30 473.800 33.800 484M27.600 480.400H32.400" stroke-width="1.500"/>
  <!-- pen/sign -->
  <path d="M23.200 524.400 25 516 31.600 510.200 36.600 515.600 30.600 522.600ZM23.200 524.400 28.800 518.600" stroke-width="1.500"/>
  <path d="M31.400 523.800Q33.400 520.400 34.400 522.600T37.600 522.400" stroke-width="1.300"/>
</svg>
<!-- ===== TASKBAR ===== -->
<div id="taskbar"></div>
<div id="search"></div>
<div class="abs" style="left:34px;top:691px;width:241px;height:1px;background:#4a4a4a"></div>
<div class="abs" style="left:798.500px;top:691.500px;width:34px;height:28.500px;background:#4c565e"></div>
<svg style="left:0;top:691px" width="1280" height="29" viewBox="0 691 1280 29" fill="none" stroke-linecap="round" stroke-linejoin="round">
  <!-- windows logo -->
  <g fill="#fff" stroke="none">
    <path d="M8.800 700.200 15.400 699.200V705H8.800ZM16.400 699 24.400 697.800V705H16.400ZM8.800 706H15.400V711.800L8.800 710.800ZM16.400 706H24.400V713.200L16.400 712Z"/>
  </g>
  <!-- search glass -->
  <circle cx="54.600" cy="702.800" r="4.600" stroke="#e4e4e4" stroke-width="1.400"/>
  <path d="M51.200 706.200 45.800 711.800" stroke="#e4e4e4" stroke-width="1.500"/>
  <!-- active underlines -->
  <g fill="#76b9ed" stroke="none">
    <rect x="282" y="717.800" width="26" height="2.200"/>
    <rect x="351.500" y="717.800" width="26" height="2.200"/>
    <rect x="421" y="717.800" width="26" height="2.200"/>
    <rect x="455.500" y="717.800" width="26" height="2.200"/>
    <rect x="559.500" y="717.800" width="26" height="2.200"/>
    <rect x="663.500" y="717.800" width="26" height="2.200"/>
    <rect x="733" y="717.800" width="26" height="2.200"/>
    <rect x="767.500" y="717.800" width="26" height="2.200"/>
    <rect x="798.500" y="717.800" width="34" height="2.200"/>
  </g>
  <!-- file explorer -->
  <g stroke="none">
    <path d="M286.600 699.600H292.400L294 701.200H302.600V711.600H286.600Z" fill="#f6c64a"/>
    <path d="M286.600 702.600H302.600V711.600H286.600Z" fill="#fbdc7a"/>
    <path d="M290.400 706.200H298.800V711.600H290.400Z" fill="#4a9ad6"/>
    <path d="M292.400 708.400H296.800V710H292.400Z" fill="#d9ecf8"/>
  </g>
  <!-- chrome x3 -->
  <g id="chr" stroke="none">
    <path d="M329.6 705.6L323.19 701.90A7.4 7.4 0 0 1 336.01 701.90Z" fill="#e54335"/>
    <path d="M329.6 705.6L336.01 701.90A7.4 7.4 0 0 1 329.60 713.00Z" fill="#f8c22d"/>
    <path d="M329.6 705.6L329.60 713.00A7.4 7.4 0 0 1 323.19 701.90Z" fill="#30a450"/>
    <circle cx="329.6" cy="705.6" r="3.400" fill="#fff"/>
    <circle cx="329.6" cy="705.6" r="2.600" fill="#4285f4"/>
  </g>
  <use href="#chr" x="35.100"/>
  <use href="#chr" x="69.500"/>
  <circle cx="333.800" cy="710.600" r="3" fill="#3a2a1c" stroke="none"/>
  <circle cx="333.800" cy="709.600" r="1.200" fill="#e8a24a" stroke="none"/>
  <circle cx="368.900" cy="710.600" r="3" fill="#3c3c3c" stroke="none"/>
  <circle cx="368.900" cy="709.600" r="1.200" fill="#f2f2f2" stroke="none"/>
  <circle cx="403.300" cy="710.600" r="3" fill="#20242c" stroke="none"/>
  <path d="M401.600 710.600H405" stroke="#9ec0e8" stroke-width="1"/>
  <!-- outlook -->
  <g stroke="none">
    <rect x="431" y="697.800" width="11.600" height="15.600" rx="1" fill="#2a8ad6"/>
    <rect x="434" y="697.800" width="8.600" height="5" fill="#52b4ee"/>
    <rect x="434" y="707.800" width="8.600" height="5.600" fill="#1a6cb8"/>
    <rect x="425.200" y="700.600" width="9.800" height="9.800" rx="1" fill="#1272c4"/>
    <circle cx="430.100" cy="705.500" r="2.500" fill="none" stroke="#fff" stroke-width="1.400"/>
  </g>
  <!-- word -->
  <g stroke="none">
    <rect x="463.600" y="697.800" width="13.400" height="15.600" rx="1" fill="#2a7ad2"/>
    <rect x="463.600" y="697.800" width="13.400" height="4" fill="#4aa6ea"/>
    <rect x="463.600" y="709.400" width="13.400" height="4" fill="#1a5aae"/>
    <rect x="459.800" y="700.600" width="9.800" height="9.800" rx="1" fill="#1a5cbe"/>
    <path d="M461.800 703.200 463 708 464.700 703.800 466.400 708 467.600 703.200" stroke="#fff" stroke-width="1.100" fill="none"/>
  </g>
  <!-- scanner -->
  <g stroke="none">
    <rect x="494.600" y="697.400" width="16.600" height="16.600" rx="2.600" fill="#4a48c6"/>
    <path d="M497.400 701.200H508.400M502.900 701.200V703" stroke="#fff" stroke-width="1.300"/>
    <path d="M499.600 703.600H506.200L508.600 709.600H497.200Z" fill="#cfd6ff"/>
    <path d="M497.200 709.600H508.600V711.200H497.200Z" fill="#fff"/>
  </g>
  <!-- CS -->
  <text x="530.200" y="709.400" font-family="Liberation Sans, sans-serif" font-weight="bold" font-size="9.600" fill="#fff" stroke="none" letter-spacing="0.300">CS</text>
  <rect x="530.600" y="711.800" width="13.600" height="1.600" fill="#28c7a0"/>
  <!-- calculator -->
  <g stroke="none">
    <rect x="567.600" y="697.400" width="10.400" height="16.800" rx="1" fill="#8a949c"/>
    <rect x="568.800" y="698.800" width="8" height="3.200" fill="#3c8c96"/>
    <g fill="#e8ecee"><rect x="568.800" y="703.600" width="2" height="2"/><rect x="571.800" y="703.600" width="2" height="2"/><rect x="574.800" y="703.600" width="2" height="2"/><rect x="568.800" y="706.800" width="2" height="2"/><rect x="571.800" y="706.800" width="2" height="2"/><rect x="574.800" y="706.800" width="2" height="2"/><rect x="568.800" y="710" width="2" height="2"/><rect x="571.800" y="710" width="2" height="2"/><rect x="574.800" y="710" width="2" height="2"/></g>
  </g>
  <!-- clapper -->
  <g stroke="none">
    <path d="M599.600 703.800 613.400 699.400 614.200 701.800 600.400 706.200Z" fill="#a05ae0"/>
    <rect x="599.800" y="704.400" width="14.600" height="9" rx="1" fill="#b066ee"/>
    <rect x="599.800" y="704.400" width="14.600" height="3.200" fill="#d9a0fa"/>
    <rect x="599.800" y="710.400" width="14.600" height="3" fill="#7a3ed0"/>
  </g>
  <!-- media play diamond -->
  <g stroke="none">
    <path d="M641.800 697.400 650 705.600 641.800 713.800 633.600 705.600Z" fill="#6a5ae0"/>
    <path d="M641.800 697.400 650 705.600H633.600Z" fill="#7c70ee"/>
    <path d="M640.200 702.800V708.400L644.600 705.600Z" fill="#fff"/>
  </g>
  <!-- whatsapp -->
  <g>
    <path d="M669.400 712.600 670.400 709.200A7.200 7.200 0 1 1 673 711.700Z" fill="#1f2c38" stroke="#35d366" stroke-width="1.600"/>
    <path d="M673.600 702.400C673 704.600 676.200 708.600 679.400 708.600L680.200 707.200 678.400 706.200 677.600 707C676.400 706.600 675.400 705.400 675.200 704.600L676 703.800 675 702Z" fill="#35d366" stroke="none"/>
  </g>
  <!-- teams -->
  <g stroke="none">
    <circle cx="716.400" cy="700.600" r="2.200" fill="#7b83eb"/>
    <circle cx="711.800" cy="699.800" r="2.800" fill="#5a62c8"/>
    <path d="M713.600 703.400H719.400V709.400Q719.400 712.200 716.600 712.200 713.600 712.200 713.600 709.400Z" fill="#7b83eb"/>
    <path d="M707.600 703.400H716V710.200Q716 714 711.800 714 707.600 714 707.600 710.200Z" fill="#5a62c8"/>
    <rect x="703.400" y="701.600" width="8.600" height="8.600" rx="1" fill="#4a52b8"/>
    <path d="M705.600 704H709.800M707.700 704V708.600" stroke="#fff" stroke-width="1.200"/>
  </g>
  <!-- spotify -->
  <g>
    <circle cx="745.400" cy="705.600" r="7.800" fill="#1ed760" stroke="none"/>
    <path d="M741 702.800Q745.600 701.400 750.200 703.600" stroke="#14202a" stroke-width="1.500"/>
    <path d="M741.400 705.600Q745.600 704.400 749.600 706.200" stroke="#14202a" stroke-width="1.300"/>
    <path d="M741.800 708.200Q745.400 707.200 748.800 708.800" stroke="#14202a" stroke-width="1.100"/>
  </g>
  <!-- photos -->
  <g stroke="none">
    <rect x="772.400" y="697.800" width="15.400" height="15.400" rx="2" fill="#3aa0e8"/>
    <path d="M772.400 713.200V709.800L778.200 703.200 783.600 709.400 785.400 707.600 787.800 710.200V713.200Z" fill="#bfe4fb"/>
    <path d="M772.400 713.200V711.600L778.200 705.200 784.800 713.200Z" fill="#e8f6ff"/>
    <circle cx="784.200" cy="701.400" r="1.400" fill="#fff"/>
  </g>
  <!-- acrobat -->
  <g>
    <rect x="807" y="697.600" width="16.400" height="16.400" rx="2.400" fill="#b30b00" stroke="none"/>
    <path d="M810.200 711C812.400 710 814.200 706 815 703.200 815.600 700.800 814 700.400 813.800 702 813.600 704.400 816.600 708.400 819.400 708.800 821.200 709 821 707.600 819.200 707.600 816.200 707.600 812 709 810.200 711Z" stroke="#fff" stroke-width="1.100" fill="none"/>
  </g>
  <!-- tray -->
  <path d="M1155.400 707.600 1160 703 1164.600 707.600" stroke="#fff" stroke-width="1.300"/>
  <g stroke="#fff" stroke-width="1.100">
    <rect x="1179.8" y="702.4" width="9" height="6.4" rx="0.6"/>
    <path d="M1190 704.200V706.800" stroke-width="1.400"/>
    <path d="M1173.600 701.400V703.400M1176.200 701.400V703.400M1172.800 703.600H1177V705.200Q1177 706.800 1174.900 706.800 1172.800 706.800 1172.800 705.200ZM1174.900 706.800V709.400Q1174.900 710.400 1176.400 710.400" stroke-width="1"/>
  </g>
  <path d="M1204.600 698.800 1210.400 700.600V706.200Q1210.400 710.400 1204.600 713 1198.800 710.400 1198.800 706.200V700.600Z" fill="#fff" stroke="none"/>
  <path d="M1204.600 698.800V713M1198.800 705.400H1210.400" stroke="#1f3040" stroke-width="1"/>
  <circle cx="1209" cy="710.600" r="3.200" fill="#23a24d" stroke="none"/>
  <path d="M1207.400 710.600 1208.600 711.800 1210.600 709.400" stroke="#fff" stroke-width="0.900"/>
  <g stroke="#e8e8e8" stroke-width="1.3">
    <path d="M1222.6 710.6A10 10 0 0 1 1232.6 700.6" />
    <path d="M1225.6 710.8A7 7 0 0 1 1232.6 703.8" />
    <path d="M1228.6 711A4 4 0 0 1 1232.6 707" />
  </g>
  <circle cx="1232.4" cy="711" r="1.3" fill="#e8e8e8" stroke="none"/>
  <path d="M1276.500 691V720" stroke="#6a7680" stroke-width="1"/>
</svg>
<div class="t" style="left:71.500px;top:699px;font-size:13.500px;letter-spacing:-0.450px;color:#e6e6e6">Pesquisa</div>
<div class="t" style="left:1244.500px;top:700px;font-size:11.300px;letter-spacing:-0.550px;color:#fff">14:56</div>
</body>
</html>
